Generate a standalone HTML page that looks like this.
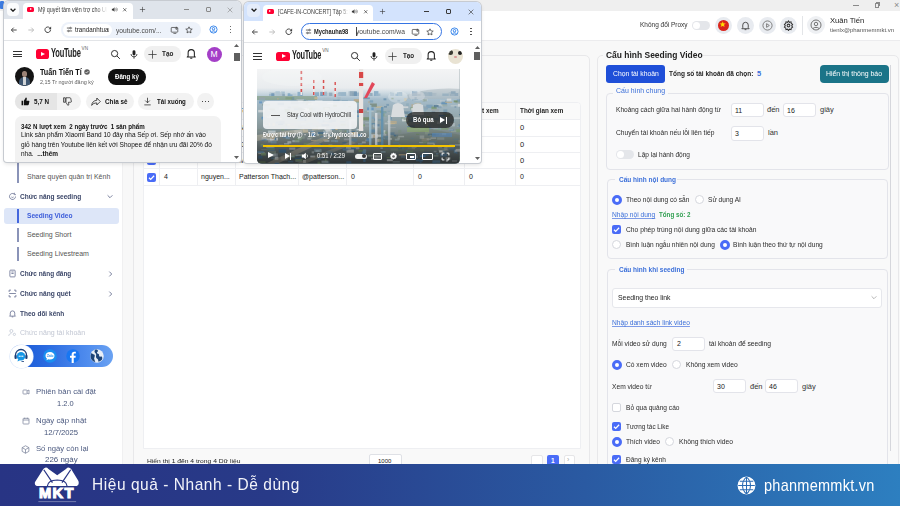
<!DOCTYPE html>
<html><head><meta charset="utf-8">
<style>
*{box-sizing:border-box;margin:0;padding:0}
html,body{width:900px;height:506px;overflow:hidden;background:#f8f8f8;font-family:"Liberation Sans",sans-serif;color:#333;position:relative}
.a{position:absolute}
.t{position:absolute;white-space:nowrap;line-height:1;transform-origin:0 0}
</style></head><body>
<!-- title bar -->
<div class="a" style="left:0;top:0;width:900px;height:11px;background:#efefef"></div>
<div class="a" style="left:0;top:1px;width:4px;height:8px;background:#3d7be0;border-radius:1px"></div>
<div class="a" style="left:853px;top:5px;width:5.5px;height:0.8px;background:#8a8a8a"></div>
<div class="a" style="left:874.5px;top:3px;width:4.5px;height:4.5px;border:0.8px solid #8a8a8a"></div><div class="a" style="left:875.8px;top:1.8px;width:4.5px;height:4.5px;border-top:0.8px solid #8a8a8a;border-right:0.8px solid #8a8a8a"></div>
<div class="t" style="left:894px;top:0.5px;font-size:9px;color:#8a8a8a">×</div>
<!-- header -->
<div class="a" style="left:0;top:11px;width:900px;height:30px;background:#fff;border-bottom:1px solid #ececee"></div>
<div class="t" style="left:640.00px;top:21px;font-size:7.5px;color:#333;transform:scaleX(0.865)">Không đổi Proxy</div>
<div class="a" style="left:692px;top:21px;width:18px;height:9px;border-radius:5px;background:#e4e6ea"><div class="a" style="left:1px;top:1px;width:7px;height:7px;border-radius:50%;background:#fff"></div></div>
<div class="a" style="left:715px;top:17px;width:17px;height:17px;border-radius:50%;background:#e8ebf0"><div class="a" style="left:3px;top:3px;width:11px;height:11px;border-radius:50%;background:#da251d"></div><div class="t" style="left:4px;top:3.5px;font-size:8px;color:#ffdf00">★</div></div>
<div class="a" style="left:737px;top:17px;width:17px;height:17px;border-radius:50%;background:#e8ebf0"></div>
<svg class="a" style="left:740px;top:20px" width="11" height="11" viewBox="0 0 24 24" fill="none" stroke="#444" stroke-width="2"><path d="M6 17V11a6 6 0 0 1 12 0v6l2 2H4z"/><path d="M10 21h4"/></svg>
<div class="a" style="left:759px;top:17px;width:17px;height:17px;border-radius:50%;background:#e8ebf0"></div>
<svg class="a" style="left:762px;top:20px" width="11" height="11" viewBox="0 0 24 24" fill="none" stroke="#777" stroke-width="2"><circle cx="12" cy="12" r="10"/><path d="M10 8l6 4-6 4z"/></svg>
<div class="a" style="left:780px;top:17px;width:17px;height:17px;border-radius:50%;background:#e8ebf0"></div>
<svg class="a" style="left:783px;top:20px" width="11" height="11" viewBox="0 0 24 24" fill="none" stroke="#333" stroke-width="2.2"><circle cx="12" cy="12" r="3"/><path d="M12 2l2 3 3.5-1 .5 3.5 3 2-2 3 2 3-3 2-.5 3.5-3.5-1-2 3-2-3-3.5 1-.5-3.5-3-2 2-3-2-3 3-2 .5-3.5 3.5 1z"/></svg>
<div class="a" style="left:802px;top:16px;width:1px;height:19px;background:#e3e5e8"></div>
<div class="a" style="left:807px;top:16px;width:18px;height:18px;border-radius:50%;background:#eef0f3"></div>
<svg class="a" style="left:810px;top:19px" width="12" height="12" viewBox="0 0 24 24" fill="none" stroke="#666" stroke-width="1.8"><circle cx="12" cy="12" r="10"/><circle cx="12" cy="10" r="3.5"/><path d="M6 19c2-3 10-3 12 0"/></svg>
<div class="t" style="left:830.00px;top:17px;font-size:8px;color:#222;transform:scaleX(0.950)">Xuân Tiến</div>
<div class="t" style="left:830.00px;top:28px;font-size:5.5px;color:#555;transform:scaleX(1.083)">tienlx@phanmemmkt.vn</div>

<!-- sidebar -->
<div class="a" style="left:0;top:40px;width:123px;height:424px;background:#fff;border-right:1px solid #f0f0f1"></div>
<div class="a" style="left:17px;top:163px;width:2px;height:7px;background:#8a93b8"></div>
<div class="a" style="left:17px;top:170px;width:2px;height:13px;background:#8a93b8"></div>
<div class="t" style="left:27px;top:173px;font-size:7px;color:#555">Share quyền quản trị Kênh</div>
<svg class="a" style="left:8px;top:192px" width="9" height="9" viewBox="0 0 24 24" fill="none" stroke="#6b7394" stroke-width="2.2"><path d="M20 12a8 8 0 1 1-4-7"/><path d="M9 13c1 2 5 2 6 0"/><path d="M17 2v5h4"/></svg>
<div class="t" style="left:19.80px;top:193px;font-size:7.5px;color:#3b4668;font-weight:bold;transform:scaleX(0.874)">Chức năng seeding</div>
<svg class="a" style="left:107px;top:194px" width="6" height="5" viewBox="0 0 10 6" fill="none" stroke="#6b7394" stroke-width="1.5"><path d="M1 1l4 4 4-4"/></svg>
<div class="a" style="left:4px;top:208px;width:115px;height:16px;background:#dde6f8;border-radius:3px"></div>
<div class="a" style="left:17px;top:209px;width:2px;height:14px;background:#4466dd"></div>
<div class="t" style="left:26.70px;top:212px;font-size:7.5px;color:#3a5bd9;font-weight:bold;transform:scaleX(0.882)">Seeding Video</div>
<div class="a" style="left:17px;top:228px;width:2px;height:14px;background:#8a93b8"></div>
<div class="t" style="left:27px;top:231px;font-size:7px;color:#555">Seeding Short</div>
<div class="a" style="left:17px;top:247px;width:2px;height:14px;background:#8a93b8"></div>
<div class="t" style="left:27px;top:250px;font-size:7px;color:#555">Seeding Livestream</div>
<svg class="a" style="left:8px;top:269px" width="9" height="9" viewBox="0 0 24 24" fill="none" stroke="#6b7394" stroke-width="2.2"><rect x="5" y="3" width="14" height="18" rx="2"/><path d="M9 8h6M9 12h6"/></svg>
<div class="t" style="left:19.90px;top:270px;font-size:7.5px;color:#3b4668;font-weight:bold;transform:scaleX(0.861)">Chức năng đăng</div>
<svg class="a" style="left:108px;top:271px" width="5" height="6" viewBox="0 0 6 10" fill="none" stroke="#6b7394" stroke-width="1.5"><path d="M1 1l4 4-4 4"/></svg>
<svg class="a" style="left:8px;top:289px" width="9" height="9" viewBox="0 0 24 24" fill="none" stroke="#6b7394" stroke-width="2.2"><path d="M3 8V3h5M16 3h5v5M21 16v5h-5M8 21H3v-5M3 12h18"/></svg>
<div class="t" style="left:19.90px;top:290px;font-size:7.5px;color:#3b4668;font-weight:bold;transform:scaleX(0.880)">Chức năng quét</div>
<svg class="a" style="left:108px;top:291px" width="5" height="6" viewBox="0 0 6 10" fill="none" stroke="#6b7394" stroke-width="1.5"><path d="M1 1l4 4-4 4"/></svg>
<svg class="a" style="left:8px;top:309px" width="9" height="9" viewBox="0 0 24 24" fill="none" stroke="#6b7394" stroke-width="2.2"><path d="M6 17V11a6 6 0 0 1 12 0v6l2 2H4z"/><path d="M10 21h4"/></svg>
<div class="t" style="left:19.90px;top:310px;font-size:7.5px;color:#3b4668;font-weight:bold;transform:scaleX(0.870)">Theo dõi kênh</div>
<svg class="a" style="left:8px;top:328px" width="9" height="9" viewBox="0 0 24 24" fill="none" stroke="#c4c9d6" stroke-width="2.2"><circle cx="9" cy="8" r="4"/><path d="M2 21c0-4 3-6 7-6"/><circle cx="17" cy="17" r="3"/></svg>
<div class="t" style="left:19.90px;top:329px;font-size:7.5px;color:#c2c7d3;transform:scaleX(0.935)">Chức năng tài khoản</div>
<!-- social pill -->
<div class="a" style="left:10px;top:344.9px;width:103px;height:22.6px;border-radius:12px;background:linear-gradient(90deg,#1656d4 0%,#2a6ae0 35%,#4f8cee 75%,#6aa2f2 100%)"></div>
<div class="a" style="left:9.8px;top:344.8px;width:23px;height:23px;border-radius:50%;background:#fff;box-shadow:0 0 0 0.6px #d6e4fa"></div>
<svg class="a" style="left:13.3px;top:348.3px" width="16" height="16" viewBox="0 0 32 32"><path d="M5 17v-3a11 11 0 0 1 22 0v3" fill="none" stroke="#1c3f78" stroke-width="2.6"/><rect x="3" y="14" width="4.5" height="8" rx="2" fill="#1c3f78"/><rect x="24.5" y="14" width="4.5" height="8" rx="2" fill="#1c3f78"/><circle cx="16" cy="16.5" r="8.5" fill="#1596e6"/><path d="M10 23l-1 4 5-2.5z" fill="#1596e6"/><circle cx="12.5" cy="16.5" r="1.3" fill="#fff"/><circle cx="16" cy="16.5" r="1.3" fill="#fff"/><circle cx="19.5" cy="16.5" r="1.3" fill="#fff"/><path d="M22 27h-5" stroke="#1c3f78" stroke-width="1.6"/></svg>
<svg class="a" style="left:42.7px;top:349px" width="14" height="14" viewBox="0 0 28 28"><circle cx="14" cy="14" r="13.5" fill="#1a8ff0"/><path d="M14 6c-5.5 0-9 3.3-9 7.5 0 2.3 1 4.2 2.8 5.6L7 22.5l3.8-1.8c1 .3 2.1.5 3.2.5 5.5 0 9-3.3 9-7.5S19.5 6 14 6z" fill="#fff"/><text x="14" y="16.3" font-family="Liberation Sans" font-size="6.5" font-weight="bold" fill="#1a8ff0" text-anchor="middle">Zalo</text></svg>
<svg class="a" style="left:66.3px;top:349px" width="14" height="14" viewBox="0 0 28 28"><circle cx="14" cy="14" r="13.5" fill="#1877f2"/><path d="M15.5 28V17.5h3.5l.5-4h-4v-2.5c0-1.2.4-2 2-2h2.2V5.5c-.4 0-1.7-.2-3.2-.2-3.2 0-5.2 1.9-5.2 5.4v2.8H8v4h3.3V28z" fill="#fff"/></svg>
<svg class="a" style="left:90px;top:349px" width="14" height="14" viewBox="0 0 28 28"><circle cx="14" cy="14" r="13.5" fill="#e8eef6"/><path d="M3 8c2 1 3 3 5 3s2 3 1 5-1 4 0 6 2 3 1 4C5 25 1 20 1 14c0-2 1-4 2-6zM11 1c3 0 5 1 5 3s-3 2-2 4 3 1 4 3-1 3 1 4 4-1 5 1 1 5-2 7-4 3-5 2 0-4-2-5-3-3-3-5 1-3 0-5-3-3-3-5 1-3 2-4z" fill="#1d4478"/></svg>
<!-- version info -->
<svg class="a" style="left:22px;top:388px" width="8" height="8" viewBox="0 0 24 24" fill="none" stroke="#7a8299" stroke-width="2.2"><rect x="3" y="6" width="12" height="12" rx="2"/><path d="M15 9l6-3v12l-6-3"/></svg>
<div class="t" style="left:35.50px;top:388px;font-size:8px;color:#4d5b80;transform:scaleX(0.971)">Phiên bản cài đặt</div>
<div class="t" style="left:57.30px;top:400px;font-size:8px;color:#46557a;font-weight:normal;transform:scaleX(0.933)">1.2.0</div>
<svg class="a" style="left:22px;top:417px" width="8" height="8" viewBox="0 0 24 24" fill="none" stroke="#7a8299" stroke-width="2.2"><rect x="3" y="4" width="18" height="17" rx="2"/><path d="M3 9h18M8 2v4M16 2v4"/></svg>
<div class="t" style="left:35.50px;top:417px;font-size:8px;color:#4d5b80;transform:scaleX(0.977)">Ngày cập nhật</div>
<div class="t" style="left:44.00px;top:429px;font-size:8px;color:#46557a;font-weight:normal;transform:scaleX(0.958)">12/7/2025</div>
<svg class="a" style="left:21px;top:445px" width="9" height="9" viewBox="0 0 24 24" fill="none" stroke="#7a8299" stroke-width="2"><path d="M12 2l9 5v10l-9 5-9-5V7z"/><path d="M3 7l9 5 9-5M12 12v10"/></svg>
<div class="t" style="left:35.50px;top:445px;font-size:8px;color:#4d5b80;transform:scaleX(0.960)">Số ngày còn lại</div>
<div class="t" style="left:45.30px;top:456px;font-size:8px;color:#46557a;font-weight:normal;transform:scaleX(0.991)">226 ngày</div>
<!-- card1 -->
<div class="a" style="left:133px;top:55px;width:457px;height:420px;background:#f9f9f9;border:1px solid #e8e8ea;border-radius:5px"></div>
<div class="a" style="left:143px;top:102px;width:438px;height:347px;background:#fff;border:1px solid #eeeff2;border-radius:4px 4px 0 0"></div>
<!-- header row -->
<div class="a" style="left:144px;top:103px;width:436px;height:17px;background:#fafafa;border-bottom:1px solid #eeeff2;border-radius:3px 3px 0 0"></div>
<div class="a" style="left:144px;top:136px;width:436px;height:1px;background:#eeeff2"></div>
<div class="a" style="left:144px;top:152px;width:436px;height:1px;background:#eeeff2"></div>
<div class="a" style="left:144px;top:168px;width:436px;height:1px;background:#eeeff2"></div>
<div class="a" style="left:144px;top:185px;width:436px;height:1px;background:#eeeff2"></div>
<!-- col dividers -->
<div class="a" style="left:159px;top:103px;width:1px;height:82px;background:#eeeff2"></div>
<div class="a" style="left:197px;top:103px;width:1px;height:82px;background:#eeeff2"></div>
<div class="a" style="left:235px;top:103px;width:1px;height:82px;background:#eeeff2"></div>
<div class="a" style="left:298px;top:103px;width:1px;height:82px;background:#eeeff2"></div>
<div class="a" style="left:346px;top:103px;width:1px;height:82px;background:#eeeff2"></div>
<div class="a" style="left:413px;top:103px;width:1px;height:82px;background:#eeeff2"></div>
<div class="a" style="left:464px;top:103px;width:1px;height:82px;background:#eeeff2"></div>
<div class="a" style="left:515px;top:103px;width:1px;height:82px;background:#eeeff2"></div>
<div class="t" style="left:238px;top:107px;font-size:7.5px;color:#222;font-weight:bold">Tên kênh</div>
<div class="t" style="left:469px;top:107px;font-size:7.5px;color:#222;font-weight:bold;transform:scaleX(0.85)">Lượt xem</div>
<div class="t" style="left:519.80px;top:107px;font-size:7.5px;color:#222;font-weight:bold;transform:scaleX(0.846)">Thời gian xem</div>
<!-- rows -->
<div class="t" style="left:239px;top:124px;font-size:7.5px;color:#222">Nguyễn...</div>
<div class="t" style="left:239px;top:141px;font-size:7.5px;color:#222">Đặng...</div>
<div class="t" style="left:239px;top:157px;font-size:7.5px;color:#222">Mai...</div>
<div class="t" style="left:520px;top:124px;font-size:7.5px;color:#222">0</div>
<div class="t" style="left:520px;top:141px;font-size:7.5px;color:#222">0</div>
<div class="t" style="left:520px;top:157px;font-size:7.5px;color:#222">0</div>
<div class="a" style="left:147px;top:156px;width:9px;height:9px;border-radius:2px;background:#4a6cf7"></div>
<div class="a" style="left:147px;top:173px;width:9px;height:9px;border-radius:2px;background:#4a6cf7"></div>
<svg class="a" style="left:147px;top:173px" width="9" height="9" viewBox="0 0 10 10" fill="none" stroke="#fff" stroke-width="1.4"><path d="M2.2 5.2l1.9 1.9 3.8-4"/></svg>
<div class="t" style="left:164px;top:173px;font-size:7px;color:#222">4</div>
<div class="t" style="left:201px;top:173px;font-size:7px;color:#222">nguyen...</div>
<div class="t" style="left:239px;top:173px;font-size:7px;color:#222">Patterson Thạch...</div>
<div class="t" style="left:302px;top:173px;font-size:7px;color:#222">@patterson...</div>
<div class="t" style="left:351px;top:173px;font-size:7px;color:#222">0</div>
<div class="t" style="left:418px;top:173px;font-size:7px;color:#222">0</div>
<div class="t" style="left:469px;top:173px;font-size:7px;color:#222">0</div>
<div class="t" style="left:520px;top:173px;font-size:7px;color:#222">0</div>
<!-- footer -->
<div class="t" style="left:147.20px;top:458px;font-size:6px;color:#222;transform:scaleX(1.121)">Hiển thị 1 đến 4 trong 4 Dữ liệu</div>
<div class="a" style="left:369px;top:454px;width:33px;height:14px;background:#fff;border:1px solid #dfe1e6;border-radius:2px"></div>
<div class="t" style="left:378px;top:458px;font-size:6px;color:#222">1000</div>
<div class="t" style="left:535px;top:456px;font-size:7px;color:#aaa">‹</div>
<div class="a" style="left:531.3px;top:454.6px;width:11.5px;height:12px;background:#fff;border:1px solid #e6e6e8;border-radius:2px"></div>
<div class="a" style="left:563.5px;top:454.6px;width:11.5px;height:12px;background:#fff;border:1px solid #e6e6e8;border-radius:2px"></div>
<div class="a" style="left:547px;top:455px;width:12px;height:12px;background:#4a6cf7;border-radius:2px"></div>
<div class="t" style="left:551px;top:458px;font-size:6.5px;color:#fff;font-weight:bold">1</div>
<div class="t" style="left:567px;top:456px;font-size:7px;color:#aaa">›</div>

<!-- card2 -->
<div class="a" style="left:597px;top:55px;width:302px;height:420px;background:#f9f9f9;border:1px solid #e8e8ea;border-radius:5px"></div>
<div class="a" style="left:603px;top:50px;width:100px;height:10px;background:#f7f8f9"></div>
<div class="t" style="left:606.20px;top:50.8px;font-size:9.2px;color:#222;font-weight:bold;transform:scaleX(0.920)">Cấu hình Seeding Video</div>
<div class="a" style="left:890px;top:65px;width:1px;height:386px;background:#d6d7dc"></div>
<div class="a" style="left:606px;top:65px;width:59px;height:18px;border-radius:3px;background:#1f4fd8"></div>
<div class="t" style="left:612.60px;top:70px;font-size:7.5px;color:#fff;transform:scaleX(0.907)">Chọn tài khoản</div>
<div class="t" style="left:668.90px;top:70px;font-size:7.5px;color:#222;font-weight:bold;transform:scaleX(0.866)">Tổng số tài khoản đã chọn:</div>
<div class="t" style="left:757px;top:70px;font-size:7.5px;color:#3b6fd9;font-weight:bold">5</div>
<div class="a" style="left:820px;top:65px;width:69px;height:18px;border-radius:4px;background:#1b7488"></div>
<div class="t" style="left:826.40px;top:70px;font-size:7.5px;color:#fff;transform:scaleX(0.920)">Hiển thị thông báo</div>
<!-- fieldset 1 -->
<div class="a" style="left:606px;top:93px;width:283px;height:77px;border:1px solid #e3e4ea;border-radius:4px;background:#f9f9fa"></div>
<div class="a" style="left:613px;top:88px;width:55px;height:8px;background:#f9f9fa"></div>
<div class="t" style="left:616.00px;top:87px;font-size:7.5px;color:#3b6fd9;transform:scaleX(0.926)">Cấu hình chung</div>
<div class="t" style="left:616.00px;top:106px;font-size:7.5px;color:#2b2b2b;transform:scaleX(0.877)">Khoảng cách giữa hai hành động từ</div>
<div class="a" style="left:731px;top:103px;width:33px;height:14px;background:#fff;border:1px solid #e3e4ea;border-radius:3px"></div>
<div class="t" style="left:735px;top:107px;font-size:7px;color:#222">11</div>
<div class="t" style="left:767px;top:106px;font-size:7.5px;color:#333">đến</div>
<div class="a" style="left:783px;top:103px;width:33px;height:14px;background:#fff;border:1px solid #e3e4ea;border-radius:3px"></div>
<div class="t" style="left:787px;top:107px;font-size:7px;color:#222">16</div>
<div class="t" style="left:820px;top:106px;font-size:7.5px;color:#333">giây</div>
<div class="t" style="left:616.00px;top:129px;font-size:7.5px;color:#2b2b2b;transform:scaleX(0.890)">Chuyển tài khoản nếu lỗi liên tiếp</div>
<div class="a" style="left:731px;top:126px;width:33px;height:15px;background:#fff;border:1px solid #e3e4ea;border-radius:3px"></div>
<div class="t" style="left:735px;top:130px;font-size:7px;color:#222">3</div>
<div class="t" style="left:768px;top:129px;font-size:7.5px;color:#333">lần</div>
<div class="a" style="left:616px;top:150px;width:18px;height:9px;border-radius:5px;background:#e4e6ea"><div class="a" style="left:1px;top:1px;width:7px;height:7px;border-radius:50%;background:#fff"></div></div>
<div class="t" style="left:638.00px;top:151px;font-size:7.5px;color:#2b2b2b;transform:scaleX(0.871)">Lặp lại hành động</div>
<!-- fieldset 2 -->
<div class="a" style="left:607px;top:179px;width:281px;height:80px;border:1px solid #e3e4ea;border-radius:4px;background:#f9f9fa"></div>
<div class="a" style="left:615px;top:174px;width:62px;height:8px;background:#f9f9fa"></div>
<div class="t" style="left:618.70px;top:176px;font-size:7.5px;color:#3b6fd9;font-weight:bold;transform:scaleX(0.866)">Cấu hình nội dung</div>
<div class="a" style="left:611.5px;top:194.5px;width:10px;height:10px;border-radius:50%;border:3.1px solid #4a6cf7;background:#fff"></div>
<div class="t" style="left:625.50px;top:196px;font-size:7.5px;color:#2b2b2b;transform:scaleX(0.879)">Theo nội dung có sẵn</div>
<div class="a" style="left:695px;top:195px;width:9px;height:9px;border-radius:50%;border:1px solid #d5d7dd;background:#fff"></div>
<div class="t" style="left:707.80px;top:196px;font-size:7.5px;color:#2b2b2b;transform:scaleX(0.875)">Sử dụng AI</div>
<div class="t" style="left:612.00px;top:211px;font-size:7px;color:#3b6fd9;text-decoration:underline;text-decoration-color:#7d9be8;text-decoration-thickness:0.6px;transform:scaleX(0.950)">Nhập nội dung</div>
<div class="t" style="left:659.40px;top:211px;font-size:7px;color:#2e9e4f;font-weight:bold;transform:scaleX(0.890)">Tổng số: 2</div>
<div class="a" style="left:612px;top:225px;width:9px;height:9px;border-radius:2px;background:#4a6cf7"></div>
<svg class="a" style="left:612px;top:225px" width="9" height="9" viewBox="0 0 10 10" fill="none" stroke="#fff" stroke-width="1.4"><path d="M2.2 5.2l1.9 1.9 3.8-4"/></svg>
<div class="t" style="left:625.50px;top:226px;font-size:7.5px;color:#2b2b2b;transform:scaleX(0.894)">Cho phép trùng nội dung giữa các tài khoản</div>
<div class="a" style="left:612px;top:240px;width:9px;height:9px;border-radius:50%;border:1px solid #d5d7dd;background:#fff"></div>
<div class="t" style="left:625.50px;top:241px;font-size:7.5px;color:#2b2b2b;transform:scaleX(0.873)">Bình luận ngẫu nhiên nội dung</div>
<div class="a" style="left:719.5px;top:239.5px;width:10px;height:10px;border-radius:50%;border:3.1px solid #4a6cf7;background:#fff"></div>
<div class="t" style="left:732.90px;top:241px;font-size:7.5px;color:#2b2b2b;transform:scaleX(0.882)">Bình luận theo thứ tự nội dung</div>
<!-- fieldset 3 -->
<div class="a" style="left:607px;top:269px;width:281px;height:220px;border:1px solid #e3e4ea;border-radius:4px;background:#f9f9fa"></div>
<div class="a" style="left:615px;top:264px;width:72px;height:8px;background:#f9f9fa"></div>
<div class="t" style="left:618.70px;top:266px;font-size:7.5px;color:#3b6fd9;font-weight:bold;transform:scaleX(0.867)">Cấu hình khi seeding</div>
<div class="a" style="left:612px;top:288px;width:270px;height:20px;background:#fff;border:1px solid #e6e7ec;border-radius:3px"></div>
<div class="t" style="left:617.70px;top:294px;font-size:7.5px;color:#222;transform:scaleX(0.913)">Seeding theo link</div>
<svg class="a" style="left:871px;top:295px" width="6" height="5" viewBox="0 0 10 6" fill="none" stroke="#999" stroke-width="1.2"><path d="M1 1l4 4 4-4"/></svg>
<div class="t" style="left:612.00px;top:319px;font-size:7px;color:#3b6fd9;text-decoration:underline;text-decoration-color:#7d9be8;text-decoration-thickness:0.6px;transform:scaleX(0.949)">Nhập danh sách link video</div>
<div class="t" style="left:612.00px;top:340px;font-size:7.5px;color:#2b2b2b;transform:scaleX(0.888)">Mỗi video sử dụng</div>
<div class="a" style="left:672px;top:337px;width:33px;height:14px;background:#fff;border:1px solid #e3e4ea;border-radius:3px"></div>
<div class="t" style="left:677px;top:340px;font-size:7px;color:#222">2</div>
<div class="t" style="left:709.20px;top:340px;font-size:7.5px;color:#2b2b2b;transform:scaleX(0.896)">tài khoản để seeding</div>
<div class="a" style="left:611.5px;top:359.5px;width:10px;height:10px;border-radius:50%;border:3.1px solid #4a6cf7;background:#fff"></div>
<div class="t" style="left:625.50px;top:361px;font-size:7.5px;color:#2b2b2b;transform:scaleX(0.887)">Có xem video</div>
<div class="a" style="left:672px;top:360px;width:9px;height:9px;border-radius:50%;border:1px solid #d5d7dd;background:#fff"></div>
<div class="t" style="left:685.50px;top:361px;font-size:7.5px;color:#2b2b2b;transform:scaleX(0.893)">Không xem video</div>
<div class="t" style="left:612.00px;top:383px;font-size:7.5px;color:#2b2b2b;transform:scaleX(0.888)">Xem video từ</div>
<div class="a" style="left:713px;top:379px;width:33px;height:14px;background:#fff;border:1px solid #e3e4ea;border-radius:3px"></div>
<div class="t" style="left:717px;top:383px;font-size:7px;color:#222">30</div>
<div class="t" style="left:750px;top:383px;font-size:7.5px;color:#333">đến</div>
<div class="a" style="left:765px;top:379px;width:33px;height:14px;background:#fff;border:1px solid #e3e4ea;border-radius:3px"></div>
<div class="t" style="left:769px;top:383px;font-size:7px;color:#222">46</div>
<div class="t" style="left:802px;top:383px;font-size:7.5px;color:#333">giây</div>
<div class="a" style="left:612px;top:403px;width:9px;height:9px;border-radius:2px;border:1px solid #d5d7dd;background:#fff"></div>
<div class="t" style="left:625.50px;top:404px;font-size:7.5px;color:#2b2b2b;transform:scaleX(0.878)">Bỏ qua quảng cáo</div>
<div class="a" style="left:612px;top:422px;width:9px;height:9px;border-radius:2px;background:#4a6cf7"></div>
<svg class="a" style="left:612px;top:422px" width="9" height="9" viewBox="0 0 10 10" fill="none" stroke="#fff" stroke-width="1.4"><path d="M2.2 5.2l1.9 1.9 3.8-4"/></svg>
<div class="t" style="left:625.50px;top:423px;font-size:7.5px;color:#2b2b2b;transform:scaleX(0.846)">Tương tác Like</div>
<div class="a" style="left:611.5px;top:436.5px;width:10px;height:10px;border-radius:50%;border:3.1px solid #4a6cf7;background:#fff"></div>
<div class="t" style="left:625.50px;top:438px;font-size:7.5px;color:#2b2b2b;transform:scaleX(0.874)">Thích video</div>
<div class="a" style="left:665px;top:437px;width:9px;height:9px;border-radius:50%;border:1px solid #d5d7dd;background:#fff"></div>
<div class="t" style="left:678.70px;top:438px;font-size:7.5px;color:#2b2b2b;transform:scaleX(0.898)">Không thích video</div>
<div class="a" style="left:612px;top:455px;width:9px;height:9px;border-radius:2px;background:#4a6cf7"></div>
<svg class="a" style="left:612px;top:455px" width="9" height="9" viewBox="0 0 10 10" fill="none" stroke="#fff" stroke-width="1.4"><path d="M2.2 5.2l1.9 1.9 3.8-4"/></svg>
<div class="t" style="left:625.50px;top:456px;font-size:7.5px;color:#2b2b2b;transform:scaleX(0.871)">Đăng ký kênh</div>
<div class="a" style="left:3.5px;top:1.3px;width:237.50px;height:160.30px;background:#fff;border-radius:5px 5px 3px 3px;box-shadow:0 0 0 1px #c7cbd1, 0 2px 4px rgba(0,0,0,.12)"></div>
<div class="a" style="left:3.5px;top:1.3px;width:237.50px;height:17.40px;background:#dfe4eb;border-radius:5px 5px 0 0"></div>
<div class="a" style="left:6.7px;top:3.1px;width:12.40px;height:12.90px;background:#fbfcfd;border-radius:4px"></div>
<svg class="a" style="left:10.30px;top:7.50px;" width="6" height="4" viewBox="0 0 10 6"><path d="M1 1l4 4 4-4" fill="none" stroke="#1f1f1f" stroke-width="2.2"/></svg>
<div class="a" style="left:23.1px;top:2.7px;width:109.90px;height:16.50px;background:#fff;border-radius:4px 4px 0 0"></div>
<div class="a" style="left:26.700000000000003px;top:6.8999999999999995px;width:7.60px;height:5.40px;background:#ff0033;border-radius:1.6px"></div>
<div class="a" style="left:29.50px;top:8.00px;width:0;height:0;border-left:2.8px solid #fff;border-top:1.6px solid transparent;border-bottom:1.6px solid transparent"></div>
<div class="a" style="left:38.30px;top:5.70px;width:69px;height:9px;overflow:hidden;-webkit-mask-image:linear-gradient(90deg,#000 85%,transparent)"><div class="t" style="left:0;top:0.9px;font-size:6.6px;color:#3a3a3a;transform:scaleX(0.82)">Mỹ quyết tâm viện trợ cho Ukraine</div></div>
<svg class="a" style="left:110.50px;top:6.10px;" width="7" height="7" viewBox="0 0 24 24"><path d="M3 9h4l5-5v16l-5-5H3z" fill="#3a3a3a"/><path d="M15.5 8.5c1.8 2 1.8 5 0 7M18.5 5.5c3.5 3.5 3.5 9.5 0 13" stroke="#3a3a3a" stroke-width="2" fill="none"/></svg>
<svg class="a" style="left:121.85px;top:6.85px;" width="5.5" height="5.5" viewBox="0 0 24 24"><path d="M5 5l14 14M19 5L5 19" stroke="#222" stroke-width="2.6" fill="none"/></svg>
<svg class="a" style="left:138.70px;top:6.10px;" width="7" height="7" viewBox="0 0 24 24"><path d="M12 3v18M3 12h18" stroke="#333" stroke-width="2" fill="none"/></svg>
<div class="a" style="left:184.0px;top:9.2px;width:5.00px;height:0.90px;background:#8a8a8a"></div>
<div class="a" style="left:205.5px;top:7.1px;width:5.00px;height:5.00px;border:0.75px solid #8a8a8a;border-radius:1px"></div>
<svg class="a" style="left:225.90px;top:5.60px;" width="8" height="8" viewBox="0 0 24 24"><path d="M5 5l14 14M19 5L5 19" stroke="#8a8a8a" stroke-width="1.9" fill="none"/></svg>
<div class="a" style="left:3.5px;top:39.9px;width:237.50px;height:0.80px;background:#e3e5e8"></div>
<svg class="a" style="left:10.20px;top:25.80px;" width="8" height="8" viewBox="0 0 24 24"><path d="M20 12H5M11 5l-7 7 7 7" fill="none" stroke="#3c3c3c" stroke-width="2.8"/></svg>
<svg class="a" style="left:27.20px;top:25.80px;" width="8" height="8" viewBox="0 0 24 24"><path d="M4 12h15M13 5l7 7-7 7" fill="none" stroke="#b0b0b0" stroke-width="2.4"/></svg>
<svg class="a" style="left:43.45px;top:25.05px;" width="9.5" height="9.5" viewBox="0 0 24 24"><path d="M19 12a7 7 0 1 1-2.2-5.1" fill="none" stroke="#3c3c3c" stroke-width="2.4"/><path d="M20.5 4v6.5H14z" fill="#3c3c3c"/></svg>
<div class="a" style="left:61.4px;top:22.2px;width:139.60px;height:15.40px;background:#edf2fa;border-radius:9px"></div>
<div class="a" style="left:63.0px;top:24.0px;width:48.80px;height:11.80px;background:#fff;border-radius:7px"></div>
<svg class="a" style="left:65.70px;top:26.30px;" width="7" height="7" viewBox="0 0 24 24"><path d="M3 7h9M18 7h3M3 17h3M12 17h9" stroke="#3a3a3a" stroke-width="2.6" fill="none"/><circle cx="15" cy="7" r="2.6" fill="none" stroke="#3a3a3a" stroke-width="2.4"/><circle cx="9" cy="17" r="2.6" fill="none" stroke="#3a3a3a" stroke-width="2.4"/></svg>
<div class="a" style="left:74.70px;top:24.80px;width:34.6px;height:10px;overflow:hidden"><div class="t" style="left:0.00px;top:2.5px;font-size:6.6px;color:#222;font-weight:normal;transform:scaleX(0.948)">trandanhtuan</div></div>
<div class="a" style="left:116.40px;top:24.80px;width:47px;height:10px;overflow:hidden"><div class="t" style="left:-0.50px;top:1.8px;font-size:7.6px;color:#474747;transform:scaleX(0.875)">youtube.com/...</div></div>
<svg class="a" style="left:169.70px;top:25.80px;" width="9" height="8" viewBox="0 0 22 22"><rect x="2" y="4" width="18" height="13" rx="1.5" fill="none" stroke="#3c3c3c" stroke-width="2"/><path d="M8 21h8M16 2v7M13 6.5l3 3 3-3" fill="none" stroke="#3c3c3c" stroke-width="2"/></svg>
<svg class="a" style="left:185.40px;top:25.80px;" width="8" height="8" viewBox="0 0 24 24"><path d="M12 2.5l2.9 6.2 6.8.7-5.1 4.6 1.4 6.7L12 17.3l-6 3.4 1.4-6.7-5.1-4.6 6.8-.7z" fill="none" stroke="#3c3c3c" stroke-width="2.2" stroke-linejoin="round"/></svg>
<svg class="a" style="left:208.80px;top:25.30px;" width="9" height="9" viewBox="0 0 24 24"><circle cx="12" cy="12" r="9.5" fill="none" stroke="#1a73e8" stroke-width="2.2"/><circle cx="12" cy="10" r="3.3" fill="none" stroke="#1a73e8" stroke-width="2.2"/><path d="M6.3 18.5c2.5-3.5 8.9-3.5 11.4 0" fill="none" stroke="#1a73e8" stroke-width="2.2"/></svg>
<div class="a" style="left:229.9px;top:26.1px;width:1.40px;height:1.40px;background:#3c3c3c;border-radius:50%"></div>
<div class="a" style="left:229.9px;top:29.1px;width:1.40px;height:1.40px;background:#3c3c3c;border-radius:50%"></div>
<div class="a" style="left:229.9px;top:32.099999999999994px;width:1.40px;height:1.40px;background:#3c3c3c;border-radius:50%"></div>
<div class="a" style="left:13.0px;top:51.05px;width:8.60px;height:0.90px;background:#333"></div>
<div class="a" style="left:13.0px;top:53.75px;width:8.60px;height:0.90px;background:#333"></div>
<div class="a" style="left:13.0px;top:56.45px;width:8.60px;height:0.90px;background:#333"></div>
<div class="a" style="left:35.6px;top:49.400000000000006px;width:13.90px;height:9.60px;background:#ff0033;border-radius:2.6px"></div>
<div class="a" style="left:40.90px;top:52.00px;width:0;height:0;border-left:4px solid #fff;border-top:2.2px solid transparent;border-bottom:2.2px solid transparent"></div>
<div class="t" style="left:50.70px;top:47.00px;font-size:12.2px;color:#212121;font-weight:bold;letter-spacing:-0.3px;transform:scaleX(0.614)">YouTube</div>
<div class="t" style="left:81.6px;top:47.07px;font-size:4.6px;color:#606060;">VN</div>
<svg class="a" style="left:109.80px;top:48.70px;" width="11" height="11" viewBox="0 0 24 24"><circle cx="10" cy="10" r="6.8" fill="none" stroke="#212121" stroke-width="2"/><path d="M15 15l6.5 6.5" stroke="#212121" stroke-width="2"/></svg>
<svg class="a" style="left:128.90px;top:48.70px;" width="10" height="11" viewBox="0 0 24 24"><rect x="8.5" y="2" width="7" height="12.5" rx="3.5" fill="#212121"/><path d="M5 11c0 4 3 6.5 7 6.5s7-2.5 7-6.5M12 17.5V22" stroke="#212121" stroke-width="2" fill="none"/></svg>
<div class="a" style="left:143.9px;top:46.2px;width:37.40px;height:16.00px;background:#f0f0f0;border-radius:9px"></div>
<svg class="a" style="left:146.60px;top:48.70px;" width="11" height="11" viewBox="0 0 24 24"><path d="M12 3v18M3 12h18" stroke="#333" stroke-width="1.6" fill="none"/></svg>
<div class="t" style="left:162.30px;top:50.24px;font-size:7.2px;color:#1f1f1f;font-weight:bold;transform:scaleX(0.891)">Tạo</div>
<svg class="a" style="left:184.55px;top:46.75px;" width="12.5" height="12.5" viewBox="0 0 24 24"><path d="M6 17.5V11a6 6 0 0 1 12 0v6.5l1.8 1.8H4.2z" fill="none" stroke="#212121" stroke-width="2" stroke-linejoin="round"/><path d="M10 21.5h4" stroke="#212121" stroke-width="2"/></svg>
<div class="a" style="left:207.2px;top:46.7px;width:15.00px;height:15.00px;background:#a43fc7;border-radius:50%"></div>
<div class="t" style="left:210.4px;top:49.67px;font-size:8.6px;color:#fff;">M</div>
<svg class="a" style="left:234.30px;top:44.00px;" width="5" height="3" viewBox="0 0 10 6"><path d="M0 6L5 0l5 6z" fill="#606060"/></svg>
<div class="a" style="left:233.8px;top:52.7px;width:6.20px;height:7.90px;background:#5f5f5f"></div>
<svg class="a" style="left:234.30px;top:155.50px;" width="5" height="3" viewBox="0 0 10 6"><path d="M0 0l5 6 5-6z" fill="#606060"/></svg>
<div class="a" style="left:14.7px;top:67.1px;width:19.2px;height:19.2px;border-radius:50%;background:#141414;overflow:hidden"><div class="a" style="left:7px;top:3.5px;width:5px;height:6px;border-radius:45%;background:#9a8276"></div><div class="a" style="left:4px;top:10px;width:11px;height:10px;border-radius:5px 5px 0 0;background:#3f5670"></div><div class="a" style="left:8px;top:10px;width:3.5px;height:8px;background:#cfd3d6"></div></div>
<div class="t" style="left:39.80px;top:68.07px;font-size:8.6px;color:#0f0f0f;font-weight:bold;transform:scaleX(0.837)">Tuấn Tiến Tí</div>
<svg class="a" style="left:83.50px;top:69.40px;" width="6" height="6" viewBox="0 0 24 24"><circle cx="12" cy="12" r="11" fill="#606060"/><path d="M6.5 12.5l3.5 3.5 7.5-8" stroke="#fff" stroke-width="3" fill="none"/></svg>
<div class="t" style="left:39.80px;top:78.79px;font-size:6.2px;color:#606060;transform:scaleX(0.883)">2,15 Tr người đăng ký</div>
<div class="a" style="left:107.6px;top:68.7px;width:38.80px;height:16.80px;background:#0f0f0f;border-radius:9px"></div>
<div class="t" style="left:114.90px;top:73.14px;font-size:7.2px;color:#fff;font-weight:bold;transform:scaleX(0.854)">Đăng ký</div>
<div class="a" style="left:15.2px;top:93px;width:65.70px;height:17.40px;background:#f2f2f2;border-radius:9px"></div>
<div class="a" style="left:15.2px;top:93px;width:41.80px;height:17.40px;background:#e5e5e5;border-radius:9px 0 0 9px"></div>
<svg class="a" style="left:20.50px;top:97.00px;" width="9" height="9" viewBox="0 0 24 24"><path d="M1.5 10h4.5v12H1.5zM8 22h10.5c1 0 1.9-.7 2.1-1.7l1.8-8.3c.2-1.1-.6-2-1.7-2H14.5l1-5.2C15.8 3.3 14.5 1.5 13 1.5L8 9.5z" fill="#0f0f0f"/></svg>
<div class="t" style="left:34.30px;top:97.94px;font-size:7.2px;color:#0f0f0f;font-weight:bold;transform:scaleX(0.878)">5,7 N</div>
<svg class="a" style="left:63.30px;top:97.00px;" width="9" height="9" viewBox="0 0 24 24"><path d="M1.5 2h4.5v12H1.5zM8 2h10.5c1 0 1.9.7 2.1 1.7l1.8 8.3c.2 1.1-.6 2-1.7 2H14.5l1 5.2c.3 1.5-1 3.3-2.5 3.3L8 14.5z" fill="none" stroke="#0f0f0f" stroke-width="1.8"/></svg>
<div class="a" style="left:85.6px;top:93px;width:48.40px;height:17.40px;background:#f2f2f2;border-radius:9px"></div>
<svg class="a" style="left:90.60px;top:97.00px;" width="10" height="9" viewBox="0 0 24 22"><path d="M14 2.5l8.5 8.5-8.5 8.5v-5C8 14.5 4 16.5 1.5 20.5c.5-7 4.5-11.5 12.5-12.5z" fill="none" stroke="#0f0f0f" stroke-width="1.8" stroke-linejoin="round"/></svg>
<div class="t" style="left:104.50px;top:97.94px;font-size:7.2px;color:#0f0f0f;font-weight:bold;transform:scaleX(0.879)">Chia sẻ</div>
<div class="a" style="left:138px;top:93px;width:55.50px;height:17.40px;background:#f2f2f2;border-radius:9px"></div>
<svg class="a" style="left:143.30px;top:97.00px;" width="9" height="9" viewBox="0 0 24 24"><path d="M12 2v13M6 9.5l6 6 6-6M3.5 21h17" fill="none" stroke="#0f0f0f" stroke-width="1.8"/></svg>
<div class="t" style="left:156.90px;top:97.94px;font-size:7.2px;color:#0f0f0f;font-weight:bold;transform:scaleX(0.850)">Tải xuống</div>
<div class="a" style="left:197.2px;top:93px;width:16.60px;height:17.40px;background:#f2f2f2;border-radius:50%"></div>
<div class="a" style="left:201.7px;top:100.9px;width:1.60px;height:1.60px;background:#0f0f0f;border-radius:50%"></div>
<div class="a" style="left:204.7px;top:100.9px;width:1.60px;height:1.60px;background:#0f0f0f;border-radius:50%"></div>
<div class="a" style="left:207.7px;top:100.9px;width:1.60px;height:1.60px;background:#0f0f0f;border-radius:50%"></div>
<div class="a" style="left:15.2px;top:116px;width:205.8px;height:45.6px;background:#f2f2f2;border-radius:7px 7px 0 0"></div>
<div class="t" style="left:20.80px;top:123.89px;font-size:7.1px;color:#0f0f0f;font-weight:bold;transform:scaleX(0.870)">342 N lượt xem&nbsp; 2 ngày trước&nbsp; 1 sản phẩm</div>
<div class="t" style="left:20.80px;top:132.29px;font-size:7.1px;color:#0f0f0f;transform:scaleX(0.913)">Link sản phẩm Xiaomi Band 10 đây nha Sếp ơi. Sếp nhớ ấn vào</div>
<div class="t" style="left:20.80px;top:141.69px;font-size:7.1px;color:#0f0f0f;transform:scaleX(0.920)">giỏ hàng trên Youtube liên kết với Shopee để nhận ưu đãi 20% đó</div>
<div class="t" style="left:20.80px;top:151.40px;font-size:7.1px;color:#0f0f0f;transform:scaleX(0.911)">nha.&nbsp; <b>...thêm</b></div>
<div class="a" style="left:244px;top:2.2px;width:237.00px;height:161.30px;background:#fff;border-radius:5px 5px 3px 3px;box-shadow:0 0 0 1px #c7cbd1, 0 2px 4px rgba(0,0,0,.12)"></div>
<div class="a" style="left:244px;top:2.2px;width:237.00px;height:18.60px;background:#d3e3fd;border-radius:5px 5px 0 0"></div>
<div class="a" style="left:247.2px;top:4.0px;width:12.40px;height:12.90px;background:#e5edfb;border-radius:4px"></div>
<svg class="a" style="left:250.80px;top:8.40px;" width="6" height="4" viewBox="0 0 10 6"><path d="M1 1l4 4 4-4" fill="none" stroke="#1f1f1f" stroke-width="2.2"/></svg>
<div class="a" style="left:263px;top:4.7px;width:110.00px;height:16.60px;background:#fff;border-radius:4px 4px 0 0"></div>
<div class="a" style="left:266.6px;top:8.899999999999999px;width:7.60px;height:5.40px;background:#ff0033;border-radius:1.6px"></div>
<div class="a" style="left:269.40px;top:10.00px;width:0;height:0;border-left:2.8px solid #fff;border-top:1.6px solid transparent;border-bottom:1.6px solid transparent"></div>
<div class="a" style="left:278.20px;top:7.70px;width:72px;height:9px;overflow:hidden;-webkit-mask-image:linear-gradient(90deg,#000 85%,transparent)"><div class="t" style="left:0;top:0.9px;font-size:6.6px;color:#3a3a3a;transform:scaleX(0.82)">[CAFE-IN-CONCERT] Tập 5: Mỹ Tâm</div></div>
<svg class="a" style="left:350.50px;top:8.10px;" width="7" height="7" viewBox="0 0 24 24"><path d="M3 9h4l5-5v16l-5-5H3z" fill="#3a3a3a"/><path d="M15.5 8.5c1.8 2 1.8 5 0 7M18.5 5.5c3.5 3.5 3.5 9.5 0 13" stroke="#3a3a3a" stroke-width="2" fill="none"/></svg>
<svg class="a" style="left:362.95px;top:8.85px;" width="5.5" height="5.5" viewBox="0 0 24 24"><path d="M5 5l14 14M19 5L5 19" stroke="#222" stroke-width="2.6" fill="none"/></svg>
<svg class="a" style="left:378.90px;top:8.10px;" width="7" height="7" viewBox="0 0 24 24"><path d="M12 3v18M3 12h18" stroke="#333" stroke-width="2" fill="none"/></svg>
<div class="a" style="left:424.0px;top:11.2px;width:5.00px;height:0.90px;background:#3a3a3a"></div>
<div class="a" style="left:445.9px;top:9.1px;width:5.00px;height:5.00px;border:0.75px solid #3a3a3a;border-radius:1px"></div>
<svg class="a" style="left:466.50px;top:7.60px;" width="8" height="8" viewBox="0 0 24 24"><path d="M5 5l14 14M19 5L5 19" stroke="#3a3a3a" stroke-width="1.9" fill="none"/></svg>
<div class="a" style="left:244px;top:41.7px;width:237.00px;height:0.80px;background:#e3e5e8"></div>
<svg class="a" style="left:251.00px;top:27.70px;" width="8" height="8" viewBox="0 0 24 24"><path d="M20 12H5M11 5l-7 7 7 7" fill="none" stroke="#3c3c3c" stroke-width="2.8"/></svg>
<svg class="a" style="left:268.00px;top:27.70px;" width="8" height="8" viewBox="0 0 24 24"><path d="M4 12h15M13 5l7 7-7 7" fill="none" stroke="#b0b0b0" stroke-width="2.4"/></svg>
<svg class="a" style="left:284.25px;top:26.95px;" width="9.5" height="9.5" viewBox="0 0 24 24"><path d="M19 12a7 7 0 1 1-2.2-5.1" fill="none" stroke="#3c3c3c" stroke-width="2.4"/><path d="M20.5 4v6.5H14z" fill="#3c3c3c"/></svg>
<div class="a" style="left:300.6px;top:23.3px;width:141.00px;height:16.40px;background:#fff;border:1.4px solid #3574e3;border-radius:9px"></div>
<svg class="a" style="left:304.90px;top:28.20px;" width="7" height="7" viewBox="0 0 24 24"><path d="M3 7h9M18 7h3M3 17h3M12 17h9" stroke="#3a3a3a" stroke-width="2.6" fill="none"/><circle cx="15" cy="7" r="2.6" fill="none" stroke="#3a3a3a" stroke-width="2.4"/><circle cx="9" cy="17" r="2.6" fill="none" stroke="#3a3a3a" stroke-width="2.4"/></svg>
<div class="t" style="left:314.40px;top:29.07px;font-size:6.6px;color:#222;font-weight:bold;transform:scaleX(0.865)">Mychauha98</div>
<div class="a" style="left:355.8px;top:27.2px;width:0.70px;height:9.00px;background:#444"></div>
<div class="a" style="left:355.60px;top:26.70px;width:49.5px;height:10px;overflow:hidden"><div class="t" style="left:0.5px;top:1.8px;font-size:7.6px;color:#474747;transform:scaleX(0.885)">youtube.com/watch?v=</div></div>
<svg class="a" style="left:410.50px;top:27.70px;" width="9" height="8" viewBox="0 0 22 22"><rect x="2" y="4" width="18" height="13" rx="1.5" fill="none" stroke="#3c3c3c" stroke-width="2"/><path d="M8 21h8M16 2v7M13 6.5l3 3 3-3" fill="none" stroke="#3c3c3c" stroke-width="2"/></svg>
<svg class="a" style="left:426.20px;top:27.70px;" width="8" height="8" viewBox="0 0 24 24"><path d="M12 2.5l2.9 6.2 6.8.7-5.1 4.6 1.4 6.7L12 17.3l-6 3.4 1.4-6.7-5.1-4.6 6.8-.7z" fill="none" stroke="#3c3c3c" stroke-width="2.2" stroke-linejoin="round"/></svg>
<svg class="a" style="left:449.50px;top:27.20px;" width="9" height="9" viewBox="0 0 24 24"><circle cx="12" cy="12" r="9.5" fill="none" stroke="#1a73e8" stroke-width="2.2"/><circle cx="12" cy="10" r="3.3" fill="none" stroke="#1a73e8" stroke-width="2.2"/><path d="M6.3 18.5c2.5-3.5 8.9-3.5 11.4 0" fill="none" stroke="#1a73e8" stroke-width="2.2"/></svg>
<div class="a" style="left:470.3px;top:28.0px;width:1.40px;height:1.40px;background:#3c3c3c;border-radius:50%"></div>
<div class="a" style="left:470.3px;top:31.0px;width:1.40px;height:1.40px;background:#3c3c3c;border-radius:50%"></div>
<div class="a" style="left:470.3px;top:34.0px;width:1.40px;height:1.40px;background:#3c3c3c;border-radius:50%"></div>
<div class="a" style="left:253.09999999999997px;top:53.24999999999999px;width:8.60px;height:0.90px;background:#333"></div>
<div class="a" style="left:253.09999999999997px;top:55.949999999999996px;width:8.60px;height:0.90px;background:#333"></div>
<div class="a" style="left:253.09999999999997px;top:58.65px;width:8.60px;height:0.90px;background:#333"></div>
<div class="a" style="left:276.2px;top:51.6px;width:13.90px;height:9.60px;background:#ff0033;border-radius:2.6px"></div>
<div class="a" style="left:281.50px;top:54.20px;width:0;height:0;border-left:4px solid #fff;border-top:2.2px solid transparent;border-bottom:2.2px solid transparent"></div>
<div class="t" style="left:291.60px;top:49.20px;font-size:12.2px;color:#212121;font-weight:bold;letter-spacing:-0.3px;transform:scaleX(0.604)">YouTube</div>
<div class="t" style="left:322.2px;top:49.27px;font-size:4.6px;color:#606060;">VN</div>
<svg class="a" style="left:350.10px;top:50.90px;" width="11" height="11" viewBox="0 0 24 24"><circle cx="10" cy="10" r="6.8" fill="none" stroke="#212121" stroke-width="2"/><path d="M15 15l6.5 6.5" stroke="#212121" stroke-width="2"/></svg>
<svg class="a" style="left:369.20px;top:50.90px;" width="10" height="11" viewBox="0 0 24 24"><rect x="8.5" y="2" width="7" height="12.5" rx="3.5" fill="#212121"/><path d="M5 11c0 4 3 6.5 7 6.5s7-2.5 7-6.5M12 17.5V22" stroke="#212121" stroke-width="2" fill="none"/></svg>
<div class="a" style="left:384.6px;top:48.4px;width:37.40px;height:16.00px;background:#f0f0f0;border-radius:9px"></div>
<svg class="a" style="left:387.30px;top:50.90px;" width="11" height="11" viewBox="0 0 24 24"><path d="M12 3v18M3 12h18" stroke="#333" stroke-width="1.6" fill="none"/></svg>
<div class="t" style="left:403.00px;top:52.44px;font-size:7.2px;color:#1f1f1f;font-weight:bold;transform:scaleX(0.875)">Tạo</div>
<svg class="a" style="left:425.25px;top:48.95px;" width="12.5" height="12.5" viewBox="0 0 24 24"><path d="M6 17.5V11a6 6 0 0 1 12 0v6.5l1.8 1.8H4.2z" fill="none" stroke="#212121" stroke-width="2" stroke-linejoin="round"/><path d="M10 21.5h4" stroke="#212121" stroke-width="2"/></svg>
<div class="a" style="left:447.8px;top:48.9px;width:15px;height:15px;border-radius:50%;background:#e9e3d3;overflow:hidden"><div class="a" style="left:0px;top:1px;width:5px;height:5px;border-radius:50%;background:#3a3a32"></div><div class="a" style="left:10px;top:2px;width:4px;height:4px;border-radius:50%;background:#222"></div><div class="a" style="left:6.3px;top:7.5px;width:2.5px;height:2px;border-radius:1px;background:#d99a98"></div></div>
<svg class="a" style="left:474.80px;top:46.00px;" width="5" height="3" viewBox="0 0 10 6"><path d="M0 6L5 0l5 6z" fill="#606060"/></svg>
<div class="a" style="left:474px;top:52.2px;width:6.20px;height:8.20px;background:#5f5f5f"></div>
<svg class="a" style="left:474.80px;top:157.20px;" width="5" height="3" viewBox="0 0 10 6"><path d="M0 0l5 6 5-6z" fill="#606060"/></svg><div class="a" style="left:257.3px;top:69.4px;width:202.7px;height:94.5px;border-radius:0 0 5px 5px;overflow:hidden;background:#7a8c92">
<svg class="a" style="left:0;top:0" width="202.7" height="94.5" viewBox="0 0 202.7 94.5"><defs>
<linearGradient id="sky" x1="0" y1="0" x2="0" y2="1">
<stop offset="0" stop-color="#f3f4f5"/><stop offset="0.2" stop-color="#e9ecee"/><stop offset="0.25" stop-color="#cfdbe2"/>
<stop offset="0.32" stop-color="#a5bccb"/><stop offset="0.5" stop-color="#95a8ae"/><stop offset="0.7" stop-color="#7d8a8a"/><stop offset="0.88" stop-color="#5f6a6c"/><stop offset="1" stop-color="#4c5558"/></linearGradient>
<linearGradient id="ctl" x1="0" y1="0" x2="0" y2="1"><stop offset="0" stop-color="#000" stop-opacity="0"/><stop offset="1" stop-color="#000" stop-opacity="0.4"/></linearGradient>
<filter id="bl"><feGaussianBlur stdDeviation="0.35"/></filter>
</defs><rect x="0" y="0" width="202.7" height="94.5" fill="url(#sky)"/><g filter="url(#bl)"><rect x="65.6" y="23.2" width="2.9" height="3.8" fill="#7fa6c2" opacity="0.8"/><rect x="166.5" y="23.5" width="2.6" height="3.5" fill="#8aa3b4" opacity="0.8"/><rect x="43.5" y="24.0" width="2.5" height="3.0" fill="#9ab5c8" opacity="0.8"/><rect x="18.4" y="22.6" width="4.5" height="4.4" fill="#7fa6c2" opacity="0.8"/><rect x="192.0" y="23.5" width="5.8" height="3.5" fill="#7fa6c2" opacity="0.8"/><rect x="117.0" y="22.1" width="4.4" height="4.9" fill="#7fa6c2" opacity="0.8"/><rect x="112.8" y="24.0" width="2.8" height="3.0" fill="#8aa3b4" opacity="0.8"/><rect x="23.9" y="22.6" width="3.9" height="4.4" fill="#9ab5c8" opacity="0.8"/><rect x="20.9" y="24.8" width="5.4" height="2.2" fill="#7fa6c2" opacity="0.8"/><rect x="111.0" y="25.3" width="2.4" height="1.7" fill="#9ab5c8" opacity="0.8"/><rect x="100.6" y="22.8" width="5.2" height="4.2" fill="#b9c9d3" opacity="0.8"/><rect x="118.7" y="24.5" width="4.7" height="2.5" fill="#9ab5c8" opacity="0.8"/><rect x="141.7" y="23.5" width="3.5" height="3.5" fill="#8aa3b4" opacity="0.8"/><rect x="100.4" y="23.9" width="4.1" height="3.1" fill="#8aa3b4" opacity="0.8"/><rect x="198.7" y="24.0" width="2.7" height="3.0" fill="#6d93b3" opacity="0.8"/><rect x="30.8" y="25.4" width="4.9" height="1.6" fill="#7fa6c2" opacity="0.8"/><rect x="155.0" y="22.4" width="5.4" height="4.6" fill="#6d93b3" opacity="0.8"/><rect x="68.9" y="23.8" width="4.1" height="3.2" fill="#b9c9d3" opacity="0.8"/><rect x="13.9" y="24.6" width="2.6" height="2.4" fill="#7fa6c2" opacity="0.8"/><rect x="12.3" y="23.2" width="6.2" height="3.8" fill="#b9c9d3" opacity="0.8"/><rect x="57.7" y="23.2" width="4.3" height="3.8" fill="#7fa6c2" opacity="0.8"/><rect x="190.7" y="23.4" width="4.1" height="3.6" fill="#b9c9d3" opacity="0.8"/><rect x="12.0" y="25.0" width="6.6" height="2.0" fill="#9ab5c8" opacity="0.8"/><rect x="80.7" y="23.8" width="7.5" height="3.2" fill="#9ab5c8" opacity="0.8"/><rect x="91.1" y="22.4" width="5.3" height="4.6" fill="#b9c9d3" opacity="0.8"/><rect x="175.1" y="24.0" width="3.7" height="3.0" fill="#6d93b3" opacity="0.8"/><rect x="138.4" y="24.7" width="4.3" height="2.3" fill="#7fa6c2" opacity="0.8"/><rect x="35.7" y="24.7" width="3.4" height="2.3" fill="#b9c9d3" opacity="0.8"/><rect x="168.5" y="24.5" width="3.1" height="2.5" fill="#9ab5c8" opacity="0.8"/><rect x="84.9" y="23.5" width="4.2" height="3.5" fill="#9ab5c8" opacity="0.8"/><rect x="140.0" y="23.3" width="5.1" height="3.7" fill="#7fa6c2" opacity="0.8"/><rect x="92.6" y="22.2" width="7.2" height="4.8" fill="#8aa3b4" opacity="0.8"/><rect x="79.5" y="25.1" width="4.4" height="1.9" fill="#b9c9d3" opacity="0.8"/><rect x="12.6" y="24.8" width="2.4" height="2.2" fill="#9ab5c8" opacity="0.8"/><rect x="22.3" y="25.1" width="5.6" height="1.9" fill="#8aa3b4" opacity="0.8"/><rect x="30.7" y="24.2" width="2.6" height="2.8" fill="#7fa6c2" opacity="0.8"/><rect x="14.3" y="24.2" width="3.2" height="2.8" fill="#6d93b3" opacity="0.8"/><rect x="193.7" y="23.8" width="5.6" height="3.2" fill="#7fa6c2" opacity="0.8"/><rect x="172.1" y="23.9" width="8.0" height="3.1" fill="#b9c9d3" opacity="0.8"/><rect x="63.2" y="22.9" width="2.9" height="4.1" fill="#6d93b3" opacity="0.8"/><rect x="97.0" y="23.7" width="6.2" height="3.3" fill="#9ab5c8" opacity="0.8"/><rect x="192.8" y="25.0" width="5.2" height="2.0" fill="#8aa3b4" opacity="0.8"/><rect x="185.3" y="24.5" width="6.5" height="2.5" fill="#7fa6c2" opacity="0.8"/><rect x="141.1" y="24.2" width="3.6" height="2.8" fill="#9ab5c8" opacity="0.8"/><rect x="72.1" y="23.6" width="3.3" height="3.4" fill="#8aa3b4" opacity="0.8"/><rect x="66.8" y="22.7" width="3.3" height="4.3" fill="#9ab5c8" opacity="0.8"/><rect x="163.4" y="22.9" width="6.9" height="4.1" fill="#9ab5c8" opacity="0.8"/><rect x="40.5" y="22.9" width="5.0" height="4.1" fill="#7fa6c2" opacity="0.8"/><rect x="160.2" y="24.8" width="4.8" height="2.2" fill="#8aa3b4" opacity="0.8"/><rect x="193.9" y="22.2" width="4.7" height="4.8" fill="#6d93b3" opacity="0.8"/><rect x="193.6" y="24.7" width="4.2" height="2.3" fill="#9ab5c8" opacity="0.8"/><rect x="95.3" y="23.8" width="4.0" height="3.2" fill="#8aa3b4" opacity="0.8"/><rect x="170.4" y="23.2" width="4.9" height="3.8" fill="#7fa6c2" opacity="0.8"/><rect x="169.2" y="24.1" width="2.7" height="2.9" fill="#9ab5c8" opacity="0.8"/><rect x="96.9" y="22.7" width="3.1" height="4.3" fill="#6d93b3" opacity="0.8"/><rect x="17.6" y="23.0" width="7.7" height="4.0" fill="#b9c9d3" opacity="0.8"/><rect x="81.4" y="23.0" width="7.7" height="4.0" fill="#9ab5c8" opacity="0.8"/><rect x="201.3" y="23.4" width="2.2" height="3.6" fill="#b9c9d3" opacity="0.8"/><rect x="163.5" y="22.6" width="2.9" height="4.4" fill="#b9c9d3" opacity="0.8"/><rect x="133.2" y="23.6" width="4.1" height="3.4" fill="#9ab5c8" opacity="0.8"/><rect x="0" y="27" width="60" height="4" fill="#7f9a7a" opacity="0.6"/><rect x="4.3" y="80.0" width="6.2" height="1.3" fill="#7d8f85" opacity="0.65"/><rect x="176.7" y="81.7" width="2.9" height="1.6" fill="#9aa3a8" opacity="0.68"/><rect x="154.8" y="49.2" width="5.0" height="3.1" fill="#5b86a6" opacity="0.86"/><rect x="71.7" y="57.8" width="5.3" height="3.3" fill="#7b9fb8" opacity="0.82"/><rect x="178.0" y="36.5" width="2.5" height="2.3" fill="#d6dadb" opacity="0.80"/><rect x="123.4" y="78.4" width="2.5" height="1.4" fill="#a9bcc4" opacity="0.70"/><rect x="66.1" y="61.7" width="5.1" height="3.0" fill="#a9bcc4" opacity="0.85"/><rect x="11.5" y="40.4" width="1.8" height="1.2" fill="#d6dadb" opacity="0.70"/><rect x="154.1" y="87.3" width="4.4" height="2.5" fill="#4d89c0" opacity="0.72"/><rect x="40.4" y="46.0" width="4.8" height="3.0" fill="#4d89c0" opacity="0.87"/><rect x="141.7" y="85.0" width="7.6" height="1.6" fill="#b9a98a" opacity="0.85"/><rect x="41.1" y="57.1" width="4.2" height="2.0" fill="#6f8a62" opacity="0.48"/><rect x="48.8" y="32.8" width="5.9" height="3.0" fill="#7d8f85" opacity="0.87"/><rect x="130.4" y="51.8" width="3.1" height="1.3" fill="#d6dadb" opacity="0.55"/><rect x="193.1" y="53.9" width="4.7" height="3.5" fill="#c7d0d3" opacity="0.52"/><rect x="87.5" y="61.5" width="3.7" height="1.5" fill="#6f8a62" opacity="0.49"/><rect x="74.2" y="50.0" width="4.5" height="2.8" fill="#3f6a8e" opacity="0.60"/><rect x="126.5" y="61.3" width="1.9" height="3.5" fill="#c7d0d3" opacity="0.89"/><rect x="21.2" y="45.3" width="1.8" height="2.9" fill="#4e7490" opacity="0.79"/><rect x="166.2" y="83.2" width="5.9" height="3.4" fill="#3f6a8e" opacity="0.52"/><rect x="186.3" y="65.1" width="6.1" height="1.2" fill="#5b86a6" opacity="0.81"/><rect x="37.2" y="86.2" width="3.2" height="1.0" fill="#8aa9b8" opacity="0.81"/><rect x="17.0" y="83.7" width="1.9" height="3.2" fill="#d6dadb" opacity="0.46"/><rect x="201.5" y="55.2" width="7.5" height="2.6" fill="#5b86a6" opacity="0.69"/><rect x="48.3" y="35.1" width="2.5" height="1.1" fill="#93a59a" opacity="0.87"/><rect x="127.4" y="62.5" width="2.8" height="2.1" fill="#7c9a72" opacity="0.57"/><rect x="162.9" y="92.6" width="1.7" height="1.0" fill="#4d89c0" opacity="0.70"/><rect x="38.4" y="58.9" width="7.6" height="1.3" fill="#7b9fb8" opacity="0.75"/><rect x="110.7" y="85.8" width="7.8" height="1.8" fill="#93a59a" opacity="0.89"/><rect x="69.5" y="82.1" width="6.1" height="2.6" fill="#3f6a8e" opacity="0.90"/><rect x="199.0" y="82.4" width="1.6" height="2.6" fill="#4e7490" opacity="0.64"/><rect x="11.2" y="71.2" width="4.0" height="2.3" fill="#9aa3a8" opacity="0.72"/><rect x="140.4" y="30.9" width="2.7" height="1.7" fill="#6f93ab" opacity="0.57"/><rect x="195.0" y="91.2" width="5.1" height="1.6" fill="#9aa3a8" opacity="0.55"/><rect x="37.1" y="49.8" width="2.0" height="1.7" fill="#93a59a" opacity="0.56"/><rect x="157.3" y="33.9" width="6.8" height="1.4" fill="#c9b68c" opacity="0.47"/><rect x="4.6" y="47.8" width="3.0" height="2.5" fill="#4d89c0" opacity="0.83"/><rect x="31.5" y="86.0" width="6.6" height="2.5" fill="#6f8a62" opacity="0.77"/><rect x="100.2" y="46.5" width="5.5" height="1.4" fill="#4d89c0" opacity="0.73"/><rect x="148.8" y="80.8" width="2.4" height="2.3" fill="#4d89c0" opacity="0.71"/><rect x="164.8" y="29.0" width="6.0" height="3.0" fill="#c7d0d3" opacity="0.49"/><rect x="8.5" y="69.4" width="7.7" height="1.9" fill="#d6dadb" opacity="0.70"/><rect x="127.2" y="68.7" width="5.9" height="2.2" fill="#6f93ab" opacity="0.66"/><rect x="14.2" y="88.6" width="7.3" height="1.2" fill="#4d89c0" opacity="0.48"/><rect x="149.3" y="44.4" width="2.0" height="1.7" fill="#93a59a" opacity="0.55"/><rect x="131.7" y="57.9" width="7.0" height="1.2" fill="#9aa3a8" opacity="0.80"/><rect x="125.1" y="69.8" width="2.0" height="1.4" fill="#4e7490" opacity="0.74"/><rect x="140.4" y="68.4" width="2.4" height="2.2" fill="#e4e7e8" opacity="0.57"/><rect x="136.2" y="73.0" width="5.9" height="1.7" fill="#4d89c0" opacity="0.58"/><rect x="94.4" y="77.9" width="8.0" height="2.4" fill="#9aa3a8" opacity="0.89"/><rect x="189.8" y="29.1" width="4.5" height="3.0" fill="#d6dadb" opacity="0.90"/><rect x="78.4" y="87.6" width="7.5" height="1.2" fill="#8aa9b8" opacity="0.51"/><rect x="106.2" y="89.9" width="2.4" height="3.1" fill="#4d89c0" opacity="0.58"/><rect x="22.8" y="51.7" width="4.7" height="3.2" fill="#3f6a8e" opacity="0.46"/><rect x="0.7" y="60.0" width="4.4" height="1.8" fill="#7d8f85" opacity="0.64"/><rect x="76.2" y="35.9" width="3.7" height="1.8" fill="#6f8a62" opacity="0.83"/><rect x="24.3" y="88.2" width="6.1" height="3.3" fill="#9aa3a8" opacity="0.56"/><rect x="13.2" y="53.4" width="7.2" height="1.2" fill="#7b9fb8" opacity="0.79"/><rect x="173.2" y="46.2" width="1.8" height="2.7" fill="#7d8f85" opacity="0.56"/><rect x="53.9" y="61.2" width="2.7" height="1.9" fill="#7b9fb8" opacity="0.85"/><rect x="164.6" y="69.0" width="7.4" height="3.4" fill="#b9a98a" opacity="0.54"/><rect x="16.3" y="88.7" width="4.2" height="2.5" fill="#7d8f85" opacity="0.74"/><rect x="58.0" y="31.2" width="7.5" height="1.3" fill="#e4e7e8" opacity="0.64"/><rect x="57.1" y="44.6" width="6.3" height="2.6" fill="#3f6a8e" opacity="0.75"/><rect x="61.0" y="64.2" width="4.1" height="1.4" fill="#7c9a72" opacity="0.48"/><rect x="101.5" y="80.8" width="5.1" height="2.1" fill="#6f8a62" opacity="0.90"/><rect x="91.2" y="37.1" width="2.8" height="1.2" fill="#6f8a62" opacity="0.70"/><rect x="64.7" y="51.9" width="6.8" height="1.5" fill="#6f93ab" opacity="0.79"/><rect x="83.7" y="54.9" width="4.9" height="1.9" fill="#6f8a62" opacity="0.79"/><rect x="101.0" y="65.3" width="3.8" height="2.7" fill="#4d89c0" opacity="0.73"/><rect x="174.9" y="42.0" width="3.3" height="1.6" fill="#3f6a8e" opacity="0.74"/><rect x="87.5" y="48.3" width="6.8" height="3.4" fill="#7d8f85" opacity="0.46"/><rect x="143.8" y="86.2" width="4.6" height="2.5" fill="#6f93ab" opacity="0.48"/><rect x="188.6" y="88.3" width="4.9" height="2.2" fill="#d6dadb" opacity="0.56"/><rect x="22.1" y="38.0" width="4.9" height="2.7" fill="#d6dadb" opacity="0.49"/><rect x="157.5" y="28.1" width="2.3" height="2.4" fill="#5b86a6" opacity="0.74"/><rect x="61.6" y="36.3" width="3.1" height="2.6" fill="#a9bcc4" opacity="0.49"/><rect x="60.9" y="89.3" width="2.7" height="1.7" fill="#6f93ab" opacity="0.45"/><rect x="61.1" y="57.9" width="7.7" height="2.6" fill="#c7d0d3" opacity="0.66"/><rect x="47.6" y="44.1" width="7.7" height="2.8" fill="#9aa3a8" opacity="0.47"/><rect x="39.3" y="85.5" width="5.7" height="1.2" fill="#c7d0d3" opacity="0.75"/><rect x="187.5" y="42.7" width="1.7" height="1.8" fill="#7b9fb8" opacity="0.61"/><rect x="80.3" y="28.4" width="3.4" height="3.1" fill="#8aa9b8" opacity="0.54"/><rect x="196.6" y="48.3" width="6.8" height="1.6" fill="#c7d0d3" opacity="0.57"/><rect x="180.3" y="35.1" width="5.6" height="2.5" fill="#c7d0d3" opacity="0.67"/><rect x="184.5" y="31.7" width="5.4" height="3.3" fill="#5b86a6" opacity="0.55"/><rect x="197.5" y="37.2" width="1.8" height="1.2" fill="#3f6a8e" opacity="0.65"/><rect x="144.3" y="48.4" width="2.2" height="1.2" fill="#7c9a72" opacity="0.60"/><rect x="37.6" y="88.8" width="6.4" height="1.1" fill="#3f6a8e" opacity="0.83"/><rect x="199.7" y="56.8" width="2.2" height="1.2" fill="#8aa9b8" opacity="0.61"/><rect x="193.7" y="36.0" width="7.8" height="1.5" fill="#b8c4c8" opacity="0.80"/><rect x="62.6" y="80.3" width="2.1" height="2.8" fill="#93a59a" opacity="0.62"/><rect x="186.4" y="40.5" width="3.9" height="3.2" fill="#6f93ab" opacity="0.73"/><rect x="50.3" y="68.7" width="4.1" height="1.9" fill="#d6dadb" opacity="0.48"/><rect x="186.5" y="44.7" width="6.4" height="3.2" fill="#6f8a62" opacity="0.61"/><rect x="67.9" y="90.0" width="1.8" height="2.9" fill="#6f8a62" opacity="0.87"/><rect x="60.3" y="74.9" width="5.4" height="3.0" fill="#8aa9b8" opacity="0.46"/><rect x="47.4" y="58.9" width="7.7" height="3.4" fill="#3f6a8e" opacity="0.81"/><rect x="185.2" y="81.0" width="2.4" height="2.2" fill="#6f93ab" opacity="0.81"/><rect x="149.7" y="81.5" width="6.5" height="2.5" fill="#6f8a62" opacity="0.84"/><rect x="93.4" y="78.9" width="5.4" height="2.3" fill="#3f6a8e" opacity="0.79"/><rect x="50.1" y="32.2" width="1.7" height="2.4" fill="#6f8a62" opacity="0.52"/><rect x="86.5" y="34.8" width="2.0" height="2.6" fill="#93a59a" opacity="0.49"/><rect x="101.0" y="74.1" width="4.4" height="1.6" fill="#7b9fb8" opacity="0.66"/><rect x="180.7" y="43.3" width="5.0" height="2.9" fill="#a9bcc4" opacity="0.80"/><rect x="59.6" y="46.2" width="3.2" height="1.6" fill="#4e7490" opacity="0.54"/><rect x="50.2" y="43.9" width="2.5" height="3.2" fill="#c9b68c" opacity="0.53"/><rect x="13.1" y="44.4" width="3.1" height="2.3" fill="#a9bcc4" opacity="0.74"/><rect x="200.9" y="34.7" width="4.6" height="3.0" fill="#d6dadb" opacity="0.86"/><rect x="8.2" y="47.1" width="2.3" height="1.5" fill="#c9b68c" opacity="0.54"/><rect x="15.2" y="61.3" width="2.7" height="2.5" fill="#6f93ab" opacity="0.50"/><rect x="120.8" y="68.3" width="2.9" height="1.9" fill="#7d8f85" opacity="0.47"/><rect x="202.7" y="30.5" width="6.3" height="3.3" fill="#6f93ab" opacity="0.82"/><rect x="82.9" y="52.2" width="5.5" height="1.2" fill="#5b86a6" opacity="0.81"/><rect x="111.1" y="32.1" width="2.2" height="2.0" fill="#b9a98a" opacity="0.52"/><rect x="108.2" y="70.4" width="4.1" height="1.7" fill="#9aa3a8" opacity="0.75"/><rect x="84.7" y="31.3" width="6.3" height="3.2" fill="#7b9fb8" opacity="0.64"/><rect x="175.2" y="92.8" width="3.9" height="1.5" fill="#3f6a8e" opacity="0.54"/><rect x="1.2" y="86.6" width="4.3" height="3.1" fill="#3f6a8e" opacity="0.71"/><rect x="73.9" y="78.2" width="2.3" height="1.1" fill="#7d8f85" opacity="0.74"/><rect x="184.4" y="33.8" width="5.5" height="1.9" fill="#4d89c0" opacity="0.53"/><rect x="70.5" y="38.5" width="2.6" height="1.2" fill="#3f6a8e" opacity="0.67"/><rect x="163.1" y="90.8" width="2.8" height="1.3" fill="#5b86a6" opacity="0.89"/><rect x="97.9" y="31.5" width="7.5" height="2.0" fill="#7c9a72" opacity="0.74"/><rect x="173.6" y="68.4" width="5.5" height="1.5" fill="#e4e7e8" opacity="0.53"/><rect x="44.2" y="54.0" width="4.9" height="2.0" fill="#a9bcc4" opacity="0.52"/><rect x="196.8" y="81.0" width="2.8" height="3.2" fill="#5b86a6" opacity="0.75"/><rect x="65.7" y="53.3" width="4.5" height="3.1" fill="#9aa3a8" opacity="0.74"/><rect x="62.5" y="44.2" width="4.0" height="1.9" fill="#4d89c0" opacity="0.65"/><rect x="4.7" y="68.2" width="4.7" height="1.6" fill="#d6dadb" opacity="0.83"/><rect x="164.3" y="54.0" width="1.9" height="1.9" fill="#b8c4c8" opacity="0.49"/><rect x="89.6" y="61.2" width="1.8" height="2.6" fill="#8aa9b8" opacity="0.86"/><rect x="63.6" y="74.8" width="2.0" height="2.9" fill="#3f6a8e" opacity="0.74"/><rect x="159.0" y="29.7" width="1.9" height="2.5" fill="#a9bcc4" opacity="0.54"/><rect x="199.0" y="60.0" width="7.7" height="3.3" fill="#7c9a72" opacity="0.76"/><rect x="146.2" y="42.4" width="6.9" height="2.5" fill="#4e7490" opacity="0.52"/><rect x="181.7" y="45.9" width="6.8" height="1.4" fill="#4d89c0" opacity="0.88"/><rect x="97.3" y="66.5" width="5.5" height="1.6" fill="#b8c4c8" opacity="0.47"/><rect x="36.9" y="38.5" width="7.6" height="2.7" fill="#3f6a8e" opacity="0.53"/><rect x="159.1" y="35.5" width="4.9" height="2.6" fill="#b8c4c8" opacity="0.88"/><rect x="91.8" y="61.9" width="6.0" height="3.2" fill="#4e7490" opacity="0.90"/><rect x="127.7" y="53.6" width="6.7" height="1.7" fill="#b8c4c8" opacity="0.71"/><rect x="73.0" y="77.7" width="4.4" height="1.4" fill="#5b86a6" opacity="0.58"/><rect x="104.6" y="48.2" width="7.8" height="3.2" fill="#6f8a62" opacity="0.78"/><rect x="151.4" y="42.4" width="3.4" height="2.6" fill="#7b9fb8" opacity="0.68"/><rect x="181.5" y="36.6" width="3.0" height="2.6" fill="#6f93ab" opacity="0.47"/><rect x="115.0" y="47.7" width="4.9" height="2.3" fill="#7b9fb8" opacity="0.71"/><rect x="119.4" y="41.3" width="5.6" height="2.2" fill="#7d8f85" opacity="0.46"/><rect x="162.5" y="74.0" width="4.4" height="1.2" fill="#7d8f85" opacity="0.84"/><rect x="158.5" y="54.1" width="3.2" height="1.0" fill="#b9a98a" opacity="0.85"/><rect x="120.6" y="65.6" width="5.4" height="2.3" fill="#e4e7e8" opacity="0.56"/><rect x="183.1" y="30.9" width="5.0" height="2.0" fill="#c7d0d3" opacity="0.52"/><rect x="184.8" y="34.8" width="5.5" height="2.6" fill="#93a59a" opacity="0.51"/><rect x="40.4" y="67.5" width="4.8" height="2.6" fill="#7c9a72" opacity="0.68"/><rect x="12.9" y="68.7" width="8.0" height="2.8" fill="#e4e7e8" opacity="0.77"/><rect x="1.3" y="82.9" width="6.3" height="2.2" fill="#d6dadb" opacity="0.53"/><rect x="202.0" y="45.0" width="5.7" height="1.3" fill="#4e7490" opacity="0.77"/><rect x="53.9" y="64.0" width="4.3" height="3.0" fill="#4d89c0" opacity="0.89"/><rect x="59.9" y="88.4" width="7.3" height="1.2" fill="#4d89c0" opacity="0.46"/><rect x="52.8" y="43.3" width="6.3" height="3.4" fill="#6f8a62" opacity="0.54"/><rect x="78.8" y="67.1" width="4.0" height="3.1" fill="#b9a98a" opacity="0.66"/><rect x="170.2" y="73.3" width="7.1" height="2.1" fill="#c7d0d3" opacity="0.71"/><rect x="62.4" y="41.8" width="5.5" height="1.2" fill="#7c9a72" opacity="0.52"/><rect x="5.5" y="34.9" width="7.5" height="1.9" fill="#7d8f85" opacity="0.77"/><rect x="6.3" y="37.0" width="5.7" height="1.1" fill="#8aa9b8" opacity="0.78"/><rect x="13.3" y="66.4" width="3.9" height="3.0" fill="#b9a98a" opacity="0.85"/><rect x="13.4" y="84.4" width="7.4" height="3.4" fill="#a9bcc4" opacity="0.56"/><rect x="41.2" y="30.2" width="7.7" height="3.3" fill="#8aa9b8" opacity="0.82"/><rect x="128.0" y="46.7" width="2.1" height="1.2" fill="#93a59a" opacity="0.58"/><rect x="68.2" y="45.0" width="3.8" height="3.3" fill="#5b86a6" opacity="0.77"/><rect x="74.6" y="48.9" width="7.8" height="2.3" fill="#9aa3a8" opacity="0.73"/><rect x="6.3" y="54.8" width="4.3" height="2.9" fill="#b8c4c8" opacity="0.66"/><rect x="9.8" y="64.8" width="6.1" height="3.1" fill="#c9b68c" opacity="0.82"/><rect x="34.5" y="28.1" width="2.8" height="2.9" fill="#5b86a6" opacity="0.45"/><rect x="99.5" y="59.9" width="6.7" height="1.5" fill="#e4e7e8" opacity="0.72"/><rect x="194.0" y="61.5" width="5.3" height="1.4" fill="#93a59a" opacity="0.87"/><rect x="46.9" y="38.8" width="7.6" height="2.9" fill="#e4e7e8" opacity="0.80"/><rect x="141.3" y="79.2" width="5.6" height="1.9" fill="#3f6a8e" opacity="0.87"/><rect x="180.8" y="76.4" width="4.2" height="2.6" fill="#b8c4c8" opacity="0.54"/><rect x="53.3" y="86.6" width="4.8" height="1.9" fill="#c7d0d3" opacity="0.87"/><rect x="25.7" y="66.6" width="6.0" height="2.5" fill="#5b86a6" opacity="0.61"/><rect x="66.2" y="38.1" width="7.0" height="2.7" fill="#6f8a62" opacity="0.53"/><rect x="88.9" y="78.3" width="5.3" height="1.3" fill="#d6dadb" opacity="0.74"/><rect x="141.2" y="61.0" width="3.2" height="2.9" fill="#7d8f85" opacity="0.78"/><rect x="197.6" y="75.0" width="5.4" height="1.9" fill="#c7d0d3" opacity="0.60"/><rect x="38.4" y="91.4" width="6.2" height="1.3" fill="#a9bcc4" opacity="0.54"/><rect x="30.6" y="37.6" width="3.5" height="1.7" fill="#4e7490" opacity="0.54"/><rect x="129.3" y="34.9" width="2.8" height="2.0" fill="#5b86a6" opacity="0.46"/><rect x="173.2" y="56.4" width="2.9" height="3.5" fill="#9aa3a8" opacity="0.66"/><rect x="28.7" y="67.2" width="4.1" height="2.9" fill="#7b9fb8" opacity="0.77"/><rect x="119.1" y="70.1" width="7.0" height="2.7" fill="#c9b68c" opacity="0.83"/><rect x="137.8" y="69.7" width="4.5" height="1.8" fill="#a9bcc4" opacity="0.85"/><rect x="49.1" y="54.0" width="6.1" height="1.4" fill="#7b9fb8" opacity="0.67"/><rect x="4.0" y="83.8" width="4.9" height="2.7" fill="#7c9a72" opacity="0.85"/><rect x="66.5" y="28.7" width="6.9" height="3.3" fill="#a9bcc4" opacity="0.47"/><rect x="110.1" y="38.5" width="6.6" height="3.4" fill="#4d89c0" opacity="0.61"/><rect x="171.7" y="57.7" width="2.8" height="2.2" fill="#6f93ab" opacity="0.74"/><rect x="168.0" y="61.9" width="4.2" height="3.4" fill="#93a59a" opacity="0.90"/><rect x="37.3" y="61.4" width="7.6" height="2.8" fill="#b8c4c8" opacity="0.74"/><rect x="51.2" y="52.8" width="1.9" height="1.2" fill="#7b9fb8" opacity="0.73"/><rect x="136.8" y="65.7" width="2.2" height="1.8" fill="#3f6a8e" opacity="0.87"/><rect x="106.8" y="42.2" width="6.7" height="2.0" fill="#93a59a" opacity="0.52"/><rect x="188.4" y="32.5" width="6.7" height="1.5" fill="#b9a98a" opacity="0.77"/><rect x="165.1" y="37.5" width="5.8" height="3.1" fill="#7b9fb8" opacity="0.66"/><rect x="59.7" y="63.6" width="2.3" height="3.1" fill="#b8c4c8" opacity="0.80"/><rect x="46.7" y="73.8" width="6.0" height="3.5" fill="#7c9a72" opacity="0.67"/><rect x="163.3" y="79.9" width="3.8" height="2.6" fill="#6f8a62" opacity="0.67"/><rect x="86.9" y="69.4" width="5.8" height="1.9" fill="#9aa3a8" opacity="0.83"/><rect x="11.6" y="81.8" width="7.4" height="3.0" fill="#7d8f85" opacity="0.69"/><rect x="70.0" y="65.9" width="5.8" height="1.5" fill="#8aa9b8" opacity="0.75"/><rect x="50.7" y="34.6" width="2.4" height="1.6" fill="#d6dadb" opacity="0.61"/><rect x="30.9" y="86.8" width="6.6" height="1.4" fill="#8aa9b8" opacity="0.75"/><rect x="181.2" y="79.2" width="7.0" height="1.5" fill="#93a59a" opacity="0.69"/><rect x="150.4" y="56.5" width="7.2" height="2.4" fill="#4e7490" opacity="0.64"/><rect x="167.6" y="58.8" width="5.1" height="2.2" fill="#7d8f85" opacity="0.77"/><rect x="50.0" y="38.7" width="5.4" height="2.8" fill="#7c9a72" opacity="0.83"/><rect x="94.9" y="64.6" width="5.8" height="3.1" fill="#b8c4c8" opacity="0.64"/><rect x="202.7" y="71.9" width="2.7" height="1.9" fill="#6f93ab" opacity="0.46"/><rect x="9.3" y="75.9" width="8.0" height="3.0" fill="#a9bcc4" opacity="0.68"/><rect x="98.2" y="86.3" width="1.7" height="2.8" fill="#7d8f85" opacity="0.60"/><rect x="174.7" y="51.8" width="4.6" height="2.3" fill="#93a59a" opacity="0.58"/><rect x="69.3" y="44.4" width="1.8" height="1.7" fill="#b8c4c8" opacity="0.82"/><rect x="81.8" y="60.7" width="3.3" height="2.3" fill="#93a59a" opacity="0.74"/><rect x="160.5" y="49.5" width="3.6" height="1.7" fill="#c9b68c" opacity="0.89"/><rect x="17.8" y="92.8" width="4.1" height="2.4" fill="#3f6a8e" opacity="0.70"/><rect x="10.1" y="47.5" width="1.5" height="1.5" fill="#e4e7e8" opacity="0.72"/><rect x="133.4" y="79.3" width="7.4" height="2.5" fill="#7d8f85" opacity="0.73"/><rect x="141.2" y="66.8" width="5.9" height="1.5" fill="#d6dadb" opacity="0.73"/><rect x="35.3" y="71.1" width="7.1" height="2.1" fill="#a9bcc4" opacity="0.86"/><rect x="132.9" y="52.0" width="6.8" height="3.0" fill="#b9a98a" opacity="0.77"/><rect x="174.8" y="40.0" width="1.7" height="1.1" fill="#c9b68c" opacity="0.74"/><rect x="189.3" y="31.6" width="5.2" height="1.1" fill="#a9bcc4" opacity="0.80"/><rect x="85.4" y="73.2" width="4.1" height="1.2" fill="#3f6a8e" opacity="0.72"/><rect x="201.3" y="70.9" width="2.5" height="2.9" fill="#b9a98a" opacity="0.50"/><rect x="130.6" y="41.8" width="2.5" height="1.0" fill="#6f93ab" opacity="0.45"/><rect x="135.7" y="92.1" width="7.1" height="1.5" fill="#a9bcc4" opacity="0.51"/><rect x="3.6" y="74.8" width="3.1" height="2.8" fill="#7c9a72" opacity="0.87"/><rect x="74.2" y="76.6" width="6.0" height="1.4" fill="#8aa9b8" opacity="0.58"/><rect x="113.0" y="60.4" width="5.9" height="3.2" fill="#5b86a6" opacity="0.77"/><rect x="2.3" y="29.0" width="5.7" height="3.0" fill="#8aa9b8" opacity="0.63"/><rect x="63.3" y="67.0" width="7.7" height="3.1" fill="#5b86a6" opacity="0.59"/><rect x="192.3" y="75.3" width="4.6" height="1.4" fill="#a9bcc4" opacity="0.61"/><rect x="130.7" y="68.9" width="4.2" height="2.0" fill="#d6dadb" opacity="0.88"/><rect x="159.0" y="64.8" width="3.4" height="1.2" fill="#6f8a62" opacity="0.84"/><rect x="147.1" y="29.0" width="2.5" height="3.1" fill="#c9b68c" opacity="0.64"/><rect x="180.0" y="52.5" width="6.0" height="2.5" fill="#c7d0d3" opacity="0.81"/><rect x="57.4" y="28.1" width="3.2" height="2.1" fill="#c9b68c" opacity="0.86"/><rect x="154.7" y="78.9" width="3.4" height="1.4" fill="#c9b68c" opacity="0.52"/><rect x="197.7" y="79.8" width="5.1" height="2.9" fill="#e4e7e8" opacity="0.61"/><rect x="17.2" y="64.0" width="6.7" height="1.5" fill="#c7d0d3" opacity="0.59"/><rect x="11.7" y="53.7" width="6.1" height="3.3" fill="#c9b68c" opacity="0.79"/><rect x="160.5" y="57.9" width="2.1" height="3.0" fill="#8aa9b8" opacity="0.55"/><rect x="117.5" y="86.3" width="7.3" height="2.3" fill="#e4e7e8" opacity="0.68"/><rect x="40.9" y="41.8" width="2.1" height="3.0" fill="#9aa3a8" opacity="0.61"/><rect x="114.4" y="54.2" width="4.9" height="1.4" fill="#5b86a6" opacity="0.87"/><rect x="100.0" y="84.3" width="3.9" height="2.2" fill="#8aa9b8" opacity="0.52"/><rect x="121.1" y="50.4" width="4.9" height="1.1" fill="#5b86a6" opacity="0.54"/><rect x="176.5" y="64.8" width="5.3" height="1.5" fill="#4e7490" opacity="0.64"/><rect x="191.9" y="77.9" width="6.8" height="3.4" fill="#4e7490" opacity="0.83"/><rect x="68.7" y="92.6" width="4.0" height="1.1" fill="#5b86a6" opacity="0.70"/><rect x="176.5" y="57.8" width="7.7" height="3.3" fill="#8aa9b8" opacity="0.84"/><rect x="129.7" y="87.9" width="6.1" height="1.2" fill="#6f8a62" opacity="0.70"/><rect x="129.9" y="90.2" width="5.9" height="2.0" fill="#d6dadb" opacity="0.83"/><rect x="75.2" y="43.3" width="6.2" height="1.4" fill="#4e7490" opacity="0.87"/><rect x="12.0" y="63.9" width="1.7" height="3.3" fill="#4e7490" opacity="0.80"/><rect x="143.8" y="70.0" width="7.9" height="1.1" fill="#7d8f85" opacity="0.59"/><rect x="1.2" y="40.9" width="6.4" height="2.5" fill="#d6dadb" opacity="0.79"/><rect x="21.4" y="49.1" width="3.2" height="1.3" fill="#e4e7e8" opacity="0.62"/><rect x="89.5" y="80.5" width="7.4" height="3.2" fill="#d6dadb" opacity="0.77"/><rect x="39.5" y="30.3" width="7.5" height="1.6" fill="#b8c4c8" opacity="0.85"/><rect x="28.3" y="57.1" width="2.1" height="3.3" fill="#6f93ab" opacity="0.73"/><rect x="91.7" y="50.1" width="6.8" height="2.2" fill="#b8c4c8" opacity="0.51"/><rect x="44.9" y="31.7" width="6.1" height="2.4" fill="#7d8f85" opacity="0.65"/><rect x="30.3" y="55.2" width="3.1" height="1.1" fill="#c9b68c" opacity="0.83"/><rect x="67.8" y="38.9" width="4.7" height="1.8" fill="#e4e7e8" opacity="0.50"/><rect x="198.4" y="31.7" width="7.3" height="2.7" fill="#93a59a" opacity="0.70"/><rect x="169.3" y="35.7" width="6.4" height="3.4" fill="#7b9fb8" opacity="0.90"/><rect x="202.3" y="88.1" width="2.1" height="1.7" fill="#7c9a72" opacity="0.48"/><rect x="147.3" y="47.1" width="7.9" height="1.0" fill="#4d89c0" opacity="0.60"/><rect x="28.4" y="28.1" width="6.9" height="2.3" fill="#7c9a72" opacity="0.61"/><rect x="8.2" y="54.6" width="3.3" height="1.5" fill="#7c9a72" opacity="0.68"/><rect x="46.7" y="39.4" width="5.4" height="3.1" fill="#e4e7e8" opacity="0.79"/><rect x="35.5" y="36.9" width="5.9" height="2.6" fill="#93a59a" opacity="0.71"/><rect x="41.0" y="32.3" width="6.3" height="2.0" fill="#5b86a6" opacity="0.68"/><rect x="70.5" y="46.3" width="5.7" height="3.4" fill="#8aa9b8" opacity="0.46"/><rect x="184.5" y="59.0" width="7.2" height="1.7" fill="#7c9a72" opacity="0.70"/><rect x="199.8" y="30.4" width="6.1" height="2.4" fill="#6f93ab" opacity="0.61"/><rect x="188.9" y="91.0" width="2.0" height="1.9" fill="#c7d0d3" opacity="0.82"/><rect x="175.4" y="48.9" width="6.1" height="2.0" fill="#5b86a6" opacity="0.58"/><rect x="21.8" y="75.5" width="4.4" height="1.1" fill="#b9a98a" opacity="0.51"/><rect x="49.4" y="33.8" width="5.5" height="1.4" fill="#9aa3a8" opacity="0.56"/><rect x="165.6" y="30.0" width="2.1" height="2.7" fill="#93a59a" opacity="0.57"/><rect x="169.7" y="69.4" width="4.5" height="1.6" fill="#d6dadb" opacity="0.50"/><rect x="176.3" y="74.6" width="1.8" height="1.3" fill="#e4e7e8" opacity="0.71"/><rect x="154.4" y="35.2" width="2.3" height="3.2" fill="#b9a98a" opacity="0.72"/><rect x="174.5" y="37.6" width="5.2" height="2.9" fill="#7c9a72" opacity="0.88"/><rect x="3.8" y="69.3" width="6.0" height="2.5" fill="#4d89c0" opacity="0.47"/><rect x="196.7" y="31.4" width="3.9" height="2.0" fill="#6f8a62" opacity="0.77"/><rect x="170.9" y="64.7" width="7.9" height="1.8" fill="#3f6a8e" opacity="0.83"/><rect x="10.9" y="61.6" width="7.7" height="3.3" fill="#c7d0d3" opacity="0.84"/><rect x="134.4" y="28.8" width="2.2" height="1.5" fill="#6f8a62" opacity="0.64"/><rect x="102.3" y="29.4" width="2.4" height="3.4" fill="#d6dadb" opacity="0.73"/><rect x="164.0" y="85.5" width="7.3" height="1.1" fill="#4e7490" opacity="0.86"/><rect x="126.4" y="68.8" width="6.7" height="1.1" fill="#a9bcc4" opacity="0.56"/><rect x="105.5" y="56.2" width="7.7" height="1.7" fill="#9aa3a8" opacity="0.61"/><rect x="33.8" y="31.9" width="7.7" height="3.3" fill="#4e7490" opacity="0.49"/><rect x="119.6" y="88.6" width="4.4" height="2.3" fill="#9aa3a8" opacity="0.86"/><rect x="117.0" y="45.8" width="6.3" height="2.9" fill="#9aa3a8" opacity="0.83"/><rect x="123.6" y="65.1" width="5.7" height="1.5" fill="#b8c4c8" opacity="0.66"/><rect x="111.1" y="67.8" width="4.5" height="1.8" fill="#c7d0d3" opacity="0.60"/><rect x="38.3" y="63.5" width="7.8" height="2.0" fill="#b8c4c8" opacity="0.52"/><rect x="193.0" y="49.1" width="3.6" height="1.7" fill="#93a59a" opacity="0.58"/><rect x="156.5" y="38.3" width="1.9" height="3.2" fill="#d6dadb" opacity="0.75"/><rect x="104.8" y="82.2" width="3.8" height="2.9" fill="#4d89c0" opacity="0.55"/><rect x="194.5" y="76.0" width="2.5" height="1.8" fill="#b8c4c8" opacity="0.51"/><rect x="41.0" y="67.7" width="3.3" height="3.1" fill="#a9bcc4" opacity="0.78"/><rect x="150.7" y="77.4" width="4.6" height="3.0" fill="#7d8f85" opacity="0.64"/><rect x="21.0" y="54.7" width="5.1" height="1.3" fill="#3f6a8e" opacity="0.88"/><rect x="115.9" y="55.2" width="6.6" height="3.2" fill="#a9bcc4" opacity="0.62"/><rect x="91.7" y="57.8" width="6.2" height="1.7" fill="#3f6a8e" opacity="0.69"/><rect x="120.7" y="70.1" width="1.5" height="2.9" fill="#e4e7e8" opacity="0.62"/><rect x="60.8" y="62.9" width="6.7" height="2.1" fill="#3f6a8e" opacity="0.71"/><rect x="17.8" y="87.8" width="3.6" height="3.1" fill="#c7d0d3" opacity="0.88"/><rect x="41.4" y="55.7" width="7.4" height="1.0" fill="#5b86a6" opacity="0.57"/><rect x="181.6" y="47.5" width="5.0" height="1.8" fill="#7b9fb8" opacity="0.68"/><rect x="104.8" y="72.5" width="4.0" height="1.9" fill="#b8c4c8" opacity="0.65"/><rect x="2.1" y="32.4" width="3.0" height="2.0" fill="#4d89c0" opacity="0.63"/><rect x="113.8" y="65.3" width="7.2" height="3.4" fill="#e4e7e8" opacity="0.63"/><rect x="155.5" y="86.4" width="5.3" height="2.7" fill="#8aa9b8" opacity="0.53"/><rect x="64.5" y="91.6" width="6.9" height="2.3" fill="#a9bcc4" opacity="0.75"/><rect x="59.8" y="50.3" width="7.6" height="2.3" fill="#7b9fb8" opacity="0.73"/><rect x="106.2" y="81.1" width="2.9" height="3.2" fill="#7b9fb8" opacity="0.53"/><rect x="127.7" y="67.2" width="3.8" height="3.5" fill="#5b86a6" opacity="0.76"/><rect x="2.2" y="28.2" width="6.1" height="2.4" fill="#9aa3a8" opacity="0.63"/><rect x="20.0" y="29.0" width="1.7" height="1.4" fill="#b9a98a" opacity="0.71"/><rect x="176.6" y="86.2" width="4.8" height="1.4" fill="#93a59a" opacity="0.63"/><rect x="24.6" y="38.2" width="6.4" height="1.3" fill="#a9bcc4" opacity="0.48"/><rect x="192.1" y="59.9" width="4.5" height="2.1" fill="#5b86a6" opacity="0.74"/><rect x="138.8" y="65.6" width="2.4" height="1.6" fill="#4e7490" opacity="0.53"/><rect x="54.0" y="34.5" width="7.4" height="2.5" fill="#b8c4c8" opacity="0.54"/><rect x="126.5" y="29.3" width="2.9" height="2.0" fill="#5b86a6" opacity="0.65"/><rect x="125.7" y="44.2" width="1.8" height="3.3" fill="#7c9a72" opacity="0.59"/><rect x="182.2" y="81.0" width="3.5" height="2.5" fill="#e4e7e8" opacity="0.89"/><rect x="13.7" y="72.0" width="5.9" height="2.5" fill="#7b9fb8" opacity="0.59"/><rect x="177.4" y="59.5" width="6.7" height="1.6" fill="#7c9a72" opacity="0.53"/><rect x="76.8" y="28.5" width="7.2" height="2.0" fill="#b8c4c8" opacity="0.50"/><rect x="108.2" y="53.1" width="4.1" height="1.2" fill="#a9bcc4" opacity="0.64"/><rect x="185.1" y="64.0" width="4.0" height="2.2" fill="#b8c4c8" opacity="0.56"/><rect x="7.1" y="71.2" width="3.7" height="1.4" fill="#7d8f85" opacity="0.49"/><rect x="54.7" y="82.3" width="2.3" height="2.1" fill="#c7d0d3" opacity="0.52"/><rect x="71.5" y="75.0" width="3.9" height="3.4" fill="#93a59a" opacity="0.58"/><rect x="96.5" y="41.3" width="7.1" height="2.7" fill="#4e7490" opacity="0.72"/><rect x="89.3" y="92.3" width="5.0" height="2.0" fill="#4d89c0" opacity="0.55"/><rect x="176.8" y="36.0" width="4.8" height="2.4" fill="#4e7490" opacity="0.78"/><rect x="155.0" y="29.9" width="6.2" height="1.4" fill="#6f93ab" opacity="0.63"/><rect x="17.4" y="39.5" width="7.0" height="1.8" fill="#a9bcc4" opacity="0.48"/><rect x="185.2" y="80.3" width="6.4" height="1.5" fill="#9aa3a8" opacity="0.49"/><rect x="58.5" y="81.1" width="4.1" height="1.9" fill="#d6dadb" opacity="0.80"/><rect x="178.9" y="84.0" width="2.4" height="1.7" fill="#6f93ab" opacity="0.61"/><rect x="162.0" y="72.9" width="7.3" height="1.1" fill="#d6dadb" opacity="0.56"/><rect x="171.6" y="50.9" width="5.6" height="1.5" fill="#a9bcc4" opacity="0.57"/><rect x="123.4" y="42.2" width="5.9" height="2.0" fill="#7c9a72" opacity="0.64"/><rect x="153.4" y="38.2" width="6.3" height="2.4" fill="#7c9a72" opacity="0.70"/><rect x="46.1" y="60.4" width="4.9" height="3.3" fill="#c9b68c" opacity="0.61"/><rect x="0.2" y="82.2" width="6.5" height="1.7" fill="#5b86a6" opacity="0.84"/><rect x="118.6" y="73.2" width="7.8" height="2.7" fill="#5b86a6" opacity="0.81"/><rect x="42.6" y="87.4" width="6.4" height="1.2" fill="#3f6a8e" opacity="0.90"/><rect x="124.7" y="42.4" width="4.9" height="1.9" fill="#7b9fb8" opacity="0.65"/><rect x="69.0" y="60.7" width="6.0" height="3.1" fill="#d6dadb" opacity="0.68"/><rect x="137.1" y="41.4" width="5.9" height="3.1" fill="#7d8f85" opacity="0.67"/><rect x="38.4" y="89.9" width="6.9" height="2.4" fill="#7c9a72" opacity="0.70"/><rect x="196.5" y="69.4" width="5.0" height="1.6" fill="#5b86a6" opacity="0.53"/><rect x="70.4" y="34.0" width="5.6" height="1.3" fill="#e4e7e8" opacity="0.75"/><rect x="48.2" y="43.7" width="4.8" height="2.1" fill="#b8c4c8" opacity="0.76"/><rect x="27.0" y="74.0" width="5.3" height="1.6" fill="#a9bcc4" opacity="0.70"/><rect x="154.2" y="39.0" width="5.8" height="2.5" fill="#d6dadb" opacity="0.83"/><rect x="82.3" y="41.4" width="6.0" height="1.0" fill="#e4e7e8" opacity="0.54"/><rect x="12.2" y="46.3" width="2.8" height="2.8" fill="#d6dadb" opacity="0.88"/><rect x="32.7" y="56.9" width="5.2" height="1.7" fill="#b9a98a" opacity="0.48"/><rect x="2.2" y="92.5" width="6.4" height="1.2" fill="#6f8a62" opacity="0.89"/><rect x="114.3" y="35.1" width="4.7" height="2.1" fill="#93a59a" opacity="0.80"/><rect x="65.2" y="51.4" width="2.1" height="1.7" fill="#4e7490" opacity="0.74"/><rect x="15.8" y="76.6" width="1.7" height="2.0" fill="#7d8f85" opacity="0.58"/><rect x="37.6" y="69.5" width="7.0" height="3.3" fill="#7c9a72" opacity="0.50"/><rect x="145.7" y="48.2" width="5.5" height="1.9" fill="#b8c4c8" opacity="0.59"/><rect x="74.7" y="63.8" width="3.9" height="3.1" fill="#c7d0d3" opacity="0.48"/><rect x="21.7" y="80.2" width="7.5" height="3.5" fill="#3f6a8e" opacity="0.86"/><rect x="191.5" y="60.1" width="4.7" height="1.4" fill="#9aa3a8" opacity="0.72"/><rect x="127.0" y="37.2" width="3.0" height="1.3" fill="#3f6a8e" opacity="0.49"/><rect x="8.1" y="56.6" width="2.7" height="2.8" fill="#6f93ab" opacity="0.46"/><rect x="123.8" y="82.2" width="4.8" height="1.4" fill="#8aa9b8" opacity="0.75"/><rect x="104.3" y="55.4" width="3.7" height="2.1" fill="#7c9a72" opacity="0.86"/><rect x="33.3" y="47.2" width="4.4" height="2.4" fill="#b8c4c8" opacity="0.71"/><rect x="95.0" y="63.3" width="4.9" height="2.1" fill="#b9a98a" opacity="0.86"/><rect x="175.4" y="91.3" width="7.8" height="2.5" fill="#5b86a6" opacity="0.78"/><rect x="67.2" y="70.8" width="5.2" height="2.1" fill="#b8c4c8" opacity="0.67"/><rect x="131.2" y="47.5" width="3.7" height="3.2" fill="#6f93ab" opacity="0.83"/><rect x="45.1" y="76.1" width="6.0" height="1.4" fill="#c9b68c" opacity="0.62"/><rect x="117.7" y="55.1" width="4.9" height="2.4" fill="#3f6a8e" opacity="0.57"/><rect x="46.1" y="91.0" width="2.8" height="2.9" fill="#c7d0d3" opacity="0.84"/><rect x="51.4" y="34.2" width="5.0" height="1.6" fill="#e4e7e8" opacity="0.55"/><rect x="92.9" y="63.2" width="6.0" height="2.8" fill="#c9b68c" opacity="0.71"/><rect x="172.6" y="72.2" width="6.7" height="1.3" fill="#4d89c0" opacity="0.70"/><rect x="144.9" y="77.2" width="2.2" height="3.5" fill="#4d89c0" opacity="0.50"/><rect x="168.3" y="53.5" width="2.6" height="3.4" fill="#c9b68c" opacity="0.66"/><rect x="18.9" y="52.3" width="5.5" height="2.0" fill="#5b86a6" opacity="0.62"/><rect x="3.1" y="66.6" width="2.9" height="1.7" fill="#7d8f85" opacity="0.64"/><rect x="180.1" y="68.4" width="7.2" height="2.4" fill="#b8c4c8" opacity="0.53"/><rect x="151.1" y="50.2" width="6.5" height="2.7" fill="#4e7490" opacity="0.51"/><rect x="75.6" y="75.9" width="7.7" height="2.8" fill="#5b86a6" opacity="0.82"/><rect x="71.6" y="51.1" width="3.6" height="2.5" fill="#5b86a6" opacity="0.87"/><rect x="136.9" y="44.5" width="2.8" height="2.1" fill="#c9b68c" opacity="0.65"/><rect x="160.4" y="59.7" width="2.0" height="1.6" fill="#7d8f85" opacity="0.70"/><rect x="58.8" y="72.7" width="4.0" height="1.4" fill="#4e7490" opacity="0.69"/><rect x="139.8" y="80.5" width="7.7" height="1.0" fill="#6f8a62" opacity="0.90"/><rect x="98.7" y="59.5" width="1.7" height="3.1" fill="#8aa9b8" opacity="0.53"/><rect x="165.9" y="72.2" width="4.1" height="2.2" fill="#7c9a72" opacity="0.76"/><rect x="90.9" y="42.9" width="7.7" height="2.3" fill="#b8c4c8" opacity="0.60"/><rect x="43.8" y="86.1" width="5.3" height="1.1" fill="#7c9a72" opacity="0.82"/><rect x="147.4" y="49.5" width="4.5" height="3.3" fill="#6f8a62" opacity="0.45"/><rect x="117.4" y="49.7" width="1.6" height="2.1" fill="#5b86a6" opacity="0.73"/><rect x="147.4" y="37.3" width="4.0" height="1.2" fill="#4e7490" opacity="0.61"/><rect x="116.3" y="66.0" width="2.4" height="2.7" fill="#b9a98a" opacity="0.86"/><rect x="19.3" y="41.0" width="4.3" height="2.4" fill="#a9bcc4" opacity="0.61"/><rect x="57.1" y="79.7" width="7.2" height="3.3" fill="#8aa9b8" opacity="0.59"/><rect x="154.7" y="76.1" width="4.8" height="2.6" fill="#b8c4c8" opacity="0.84"/><rect x="145.1" y="49.7" width="6.1" height="2.7" fill="#e4e7e8" opacity="0.68"/><rect x="181.3" y="80.6" width="8.0" height="1.4" fill="#93a59a" opacity="0.45"/><rect x="176.5" y="57.5" width="4.4" height="2.4" fill="#9aa3a8" opacity="0.87"/><rect x="118.9" y="37.3" width="6.2" height="1.6" fill="#c9b68c" opacity="0.70"/><rect x="190.0" y="50.1" width="7.5" height="2.5" fill="#8aa9b8" opacity="0.71"/><rect x="61.7" y="51.0" width="4.5" height="3.4" fill="#7b9fb8" opacity="0.77"/><rect x="186.9" y="82.5" width="3.6" height="1.4" fill="#4e7490" opacity="0.70"/><rect x="153.7" y="68.7" width="3.0" height="1.1" fill="#5b86a6" opacity="0.63"/><rect x="40.6" y="67.2" width="7.1" height="2.6" fill="#93a59a" opacity="0.56"/><rect x="11.5" y="36.4" width="1.8" height="1.2" fill="#c9b68c" opacity="0.60"/><rect x="27.7" y="40.2" width="5.0" height="3.2" fill="#6f8a62" opacity="0.87"/><rect x="43.0" y="49.2" width="6.4" height="2.6" fill="#3f6a8e" opacity="0.72"/><rect x="162.2" y="39.3" width="7.1" height="3.0" fill="#8aa9b8" opacity="0.73"/><rect x="67.8" y="60.1" width="5.4" height="1.6" fill="#d6dadb" opacity="0.84"/><rect x="5.2" y="48.6" width="5.8" height="1.8" fill="#7b9fb8" opacity="0.73"/><rect x="146.8" y="49.4" width="2.1" height="1.4" fill="#7d8f85" opacity="0.69"/><rect x="170.4" y="51.3" width="3.9" height="1.9" fill="#c9b68c" opacity="0.84"/><rect x="31.1" y="91.8" width="5.2" height="1.6" fill="#4e7490" opacity="0.82"/><rect x="96.8" y="30.1" width="5.7" height="2.6" fill="#b9a98a" opacity="0.89"/><rect x="91.9" y="46.1" width="4.9" height="3.4" fill="#7d8f85" opacity="0.56"/><rect x="113.1" y="34.5" width="6.8" height="3.4" fill="#7d8f85" opacity="0.90"/><rect x="46.2" y="77.2" width="2.1" height="1.1" fill="#7d8f85" opacity="0.51"/><rect x="110.1" y="41.3" width="6.6" height="1.6" fill="#b8c4c8" opacity="0.78"/><rect x="183.0" y="84.6" width="7.1" height="2.9" fill="#4d89c0" opacity="0.46"/><rect x="157.7" y="43.8" width="7.9" height="2.2" fill="#b8c4c8" opacity="0.86"/><rect x="78.9" y="41.8" width="6.6" height="1.1" fill="#6f93ab" opacity="0.48"/><rect x="130.8" y="54.1" width="7.1" height="1.1" fill="#c9b68c" opacity="0.62"/><rect x="183.9" y="52.4" width="5.8" height="3.2" fill="#6f93ab" opacity="0.56"/><rect x="53.2" y="56.2" width="3.0" height="1.5" fill="#7b9fb8" opacity="0.74"/><rect x="60.5" y="92.6" width="2.9" height="2.4" fill="#7c9a72" opacity="0.66"/><rect x="189.3" y="78.0" width="7.7" height="1.3" fill="#9aa3a8" opacity="0.58"/><rect x="67.2" y="59.6" width="7.3" height="1.4" fill="#d6dadb" opacity="0.55"/><rect x="10.6" y="78.8" width="7.0" height="2.8" fill="#5b86a6" opacity="0.80"/><rect x="175.0" y="39.8" width="7.1" height="3.5" fill="#9aa3a8" opacity="0.76"/><rect x="163.2" y="37.9" width="7.4" height="1.3" fill="#9aa3a8" opacity="0.52"/><rect x="149.2" y="34.3" width="2.6" height="2.7" fill="#8aa9b8" opacity="0.64"/><rect x="130.2" y="71.2" width="4.1" height="1.8" fill="#5b86a6" opacity="0.71"/><rect x="40.8" y="68.8" width="1.6" height="1.3" fill="#c7d0d3" opacity="0.71"/><rect x="141.6" y="75.4" width="1.8" height="3.2" fill="#8aa9b8" opacity="0.85"/><rect x="24.4" y="59.7" width="2.4" height="2.1" fill="#7c9a72" opacity="0.55"/><rect x="109.5" y="69.2" width="5.0" height="3.5" fill="#4d89c0" opacity="0.61"/><rect x="100.6" y="87.7" width="3.8" height="1.5" fill="#c7d0d3" opacity="0.78"/><rect x="55.3" y="39.5" width="3.2" height="1.2" fill="#5b86a6" opacity="0.54"/><rect x="9.7" y="79.3" width="7.7" height="1.7" fill="#6f8a62" opacity="0.76"/><rect x="132.4" y="63.4" width="5.1" height="2.7" fill="#4e7490" opacity="0.63"/><rect x="64.5" y="55.2" width="7.8" height="2.0" fill="#3f6a8e" opacity="0.85"/><rect x="162.9" y="86.4" width="5.6" height="1.6" fill="#4d89c0" opacity="0.87"/><rect x="51.6" y="67.7" width="4.0" height="1.6" fill="#93a59a" opacity="0.75"/><rect x="17.6" y="68.4" width="1.7" height="2.8" fill="#3f6a8e" opacity="0.76"/><rect x="65.8" y="70.0" width="5.1" height="1.8" fill="#c9b68c" opacity="0.45"/><rect x="151.3" y="83.5" width="4.8" height="2.5" fill="#3f6a8e" opacity="0.56"/><rect x="127.6" y="76.3" width="4.0" height="2.8" fill="#3f6a8e" opacity="0.89"/><rect x="54.0" y="70.9" width="6.9" height="1.2" fill="#b9a98a" opacity="0.75"/><rect x="187.3" y="77.8" width="3.2" height="3.1" fill="#b8c4c8" opacity="0.68"/><rect x="96.6" y="42.4" width="2.4" height="3.3" fill="#4d89c0" opacity="0.61"/><rect x="41.5" y="39.0" width="3.9" height="2.7" fill="#7d8f85" opacity="0.82"/><rect x="93.3" y="69.6" width="6.9" height="3.2" fill="#5b86a6" opacity="0.59"/><rect x="73.3" y="84.1" width="4.3" height="2.0" fill="#4e7490" opacity="0.62"/><rect x="73.9" y="71.1" width="4.9" height="1.8" fill="#8aa9b8" opacity="0.57"/><rect x="58.9" y="57.0" width="2.2" height="2.6" fill="#7c9a72" opacity="0.79"/><rect x="30.4" y="72.2" width="3.9" height="2.3" fill="#c7d0d3" opacity="0.73"/><rect x="106.1" y="80.1" width="3.1" height="2.4" fill="#6f93ab" opacity="0.71"/><rect x="11.7" y="39.6" width="6.2" height="1.7" fill="#6f8a62" opacity="0.57"/><rect x="53.8" y="56.5" width="4.9" height="2.2" fill="#8aa9b8" opacity="0.54"/><rect x="85.8" y="79.5" width="5.5" height="1.9" fill="#5b86a6" opacity="0.77"/><rect x="76.2" y="30.7" width="6.4" height="3.4" fill="#7b9fb8" opacity="0.74"/><rect x="164.4" y="50.9" width="4.0" height="2.4" fill="#93a59a" opacity="0.89"/><rect x="172.6" y="65.7" width="1.9" height="1.5" fill="#8aa9b8" opacity="0.49"/><rect x="90.3" y="53.6" width="4.2" height="3.3" fill="#6f93ab" opacity="0.50"/><rect x="114.2" y="88.8" width="6.1" height="2.1" fill="#e4e7e8" opacity="0.53"/><rect x="13.2" y="53.8" width="2.4" height="2.9" fill="#6f93ab" opacity="0.75"/><rect x="150.1" y="54.1" width="1.8" height="2.7" fill="#b9a98a" opacity="0.60"/><rect x="78.5" y="57.9" width="2.1" height="3.1" fill="#c9b68c" opacity="0.82"/><rect x="20.6" y="33.7" width="6.4" height="2.4" fill="#5b86a6" opacity="0.82"/><rect x="40.5" y="49.8" width="7.1" height="2.4" fill="#7b9fb8" opacity="0.83"/><rect x="28.4" y="54.5" width="1.8" height="2.6" fill="#6f8a62" opacity="0.60"/><rect x="105.0" y="28.4" width="7.9" height="1.7" fill="#4e7490" opacity="0.49"/><rect x="77.8" y="71.2" width="3.4" height="2.0" fill="#7b9fb8" opacity="0.76"/><rect x="62.2" y="44.2" width="4.0" height="2.1" fill="#b9a98a" opacity="0.57"/><rect x="40.9" y="31.4" width="5.0" height="1.9" fill="#d6dadb" opacity="0.75"/><rect x="143.9" y="37.2" width="7.5" height="1.9" fill="#d6dadb" opacity="0.86"/><rect x="112.7" y="31.3" width="3.5" height="2.3" fill="#7b9fb8" opacity="0.88"/><rect x="166.9" y="30.3" width="2.9" height="2.1" fill="#93a59a" opacity="0.77"/><rect x="162.7" y="66.5" width="4.5" height="3.3" fill="#d6dadb" opacity="0.54"/><rect x="41.2" y="39.7" width="7.1" height="1.3" fill="#7d8f85" opacity="0.84"/><rect x="14.6" y="66.8" width="2.7" height="3.3" fill="#b9a98a" opacity="0.78"/><rect x="33.3" y="42.4" width="6.2" height="2.9" fill="#93a59a" opacity="0.69"/><rect x="32.2" y="78.5" width="6.1" height="2.3" fill="#d6dadb" opacity="0.49"/><rect x="159.0" y="89.8" width="4.2" height="2.6" fill="#4e7490" opacity="0.77"/><rect x="89.7" y="55.6" width="7.1" height="3.3" fill="#7d8f85" opacity="0.47"/><rect x="169.5" y="47.1" width="3.0" height="2.5" fill="#6f8a62" opacity="0.77"/><rect x="145.8" y="48.1" width="3.2" height="2.4" fill="#93a59a" opacity="0.52"/><rect x="162.0" y="91.7" width="4.0" height="1.1" fill="#3f6a8e" opacity="0.52"/><rect x="59.0" y="70.6" width="6.0" height="1.5" fill="#7d8f85" opacity="0.78"/><path d="M0 66 L60 58 L66 60 L0 72z" fill="#c8c2b0" opacity="0.55"/><path d="M10 94 L70 66 L76 68 L22 94z" fill="#b7b09c" opacity="0.5"/><path d="M40 94 L95 72 L99 74 L50 94z" fill="#a9a392" opacity="0.45"/><path d="M118 70 L175 60 L203 66 L203 80 L130 84z" fill="#6b7a6e" opacity="0.4"/><rect x="150" y="58" width="22" height="5" fill="#8fae6a" opacity="0.6"/><rect x="175" y="64" width="20" height="4" fill="#5d8fc4" opacity="0.6"/></g><rect x="43.5" y="1" width="1.7" height="25" fill="#eeeaea"/><rect x="43.5" y="2" width="1.7" height="3" fill="#d85050"/><rect x="43.5" y="8" width="1.7" height="3" fill="#d85050"/><rect x="43.5" y="14" width="1.7" height="3" fill="#d85050"/><rect x="43.5" y="20" width="1.7" height="3" fill="#d85050"/><rect x="56.0" y="10" width="1.5" height="16" fill="#eeeaea"/><rect x="56.0" y="11" width="1.5" height="3" fill="#d85050"/><rect x="56.0" y="17" width="1.5" height="3" fill="#d85050"/><rect x="56.0" y="23" width="1.5" height="3" fill="#d85050"/><rect x="65.8" y="10" width="1.5" height="16" fill="#eeeaea"/><rect x="65.8" y="11" width="1.5" height="3" fill="#d85050"/><rect x="65.8" y="17" width="1.5" height="3" fill="#d85050"/><rect x="65.8" y="23" width="1.5" height="3" fill="#d85050"/><rect x="77.5" y="12" width="1.4" height="14" fill="#eeeaea"/><rect x="77.5" y="13" width="1.4" height="3" fill="#d85050"/><rect x="77.5" y="19" width="1.4" height="3" fill="#d85050"/><rect x="77.5" y="25" width="1.4" height="3" fill="#d85050"/><rect x="102" y="0" width="4.2" height="62" fill="#e9e5e3"/><rect x="102" y="3" width="4.2" height="6" fill="#d84848"/><rect x="102" y="14" width="4.2" height="3" fill="#d84848"/><rect x="102" y="40" width="4.2" height="4" fill="#c94040"/><path d="M107 29 L115 13 L118 15 L110 29z" fill="#e2485a"/><path d="M150 26 Q175 18 203 20 L203 30 L150 30z" fill="#a9b6bc" opacity="0.5"/><path d="M136 36 Q141 32 146 36 L148 48 L134 48z" fill="#d9dddf"/><path d="M156 36 Q161 33 166 36 L167 46 L155 46z" fill="#d5d9db"/><ellipse cx="141" cy="28" rx="10" ry="6" fill="#eef0f1" opacity="0.35"/><ellipse cx="160" cy="27" rx="8" ry="5" fill="#eef0f1" opacity="0.3"/><ellipse cx="35" cy="8" rx="30" ry="9" fill="#f6f7f8" opacity="0.3"/><rect x="112" y="36" width="2.4" height="42" fill="#9fc0d0" opacity="0.85"/><rect x="118" y="44" width="2.4" height="34" fill="#d7dde0" opacity="0.85"/><rect x="124" y="38" width="2.4" height="40" fill="#5f90b0" opacity="0.85"/><rect x="131" y="46" width="2.4" height="30" fill="#c4ccd0" opacity="0.85"/><rect x="92" y="50" width="2.4" height="26" fill="#b9c3c7" opacity="0.85"/><rect x="0" y="60" width="202.7" height="34.5" fill="url(#ctl)"/></svg>
<div class="a" style="left:5.4px;top:31.9px;width:94.6px;height:27.5px;border-radius:4px;background:rgba(244,245,246,.9)"></div>
<div class="a" style="left:13.4px;top:45.8px;width:9px;height:0.7px;background:#555"></div>
<div class="t" style="left:29.40px;top:42.36px;font-size:6.8px;color:#2a2a2a;transform:scaleX(0.835)">Stay Cool with HydroChill</div>
<div class="a" style="left:148.6px;top:43.1px;width:48px;height:15.5px;border-radius:8px;background:rgba(28,28,28,.72)"></div>
<div class="t" style="left:156.00px;top:46.94px;font-size:7.2px;color:#fff;font-weight:bold;transform:scaleX(0.844)">Bỏ qua</div>
<div class="a" style="left:182.7px;top:47.6px;width:0;height:0;border-left:5.2px solid #fff;border-top:3.4px solid transparent;border-bottom:3.4px solid transparent"></div>
<div class="a" style="left:188.3px;top:47.6px;width:1.2px;height:6.8px;background:#fff"></div>
<div class="t" style="left:5.90px;top:62.63px;font-size:6.3px;color:#fff;font-weight:bold;text-shadow:0 0 1px rgba(0,0,0,.4);transform:scaleX(0.890)">Được tài trợ&nbsp;ⓘ&nbsp;· 1/2&nbsp;&nbsp;&nbsp;&nbsp; try.hydrochill.co</div>
<div class="a" style="left:5.4px;top:75.7px;width:192px;height:1.6px;background:#f4c400"></div>
<div class="a" style="left:10.6px;top:83.1px;width:0;height:0;border-left:6px solid #fff;border-top:3.8px solid transparent;border-bottom:3.8px solid transparent"></div>
<div class="a" style="left:27.6px;top:83.6px;width:0;height:0;border-left:5px solid #fff;border-top:3.3px solid transparent;border-bottom:3.3px solid transparent"></div>
<div class="a" style="left:32.9px;top:83.6px;width:1.2px;height:6.6px;background:#fff"></div>
<svg class="a" style="left:43.5px;top:82.9px" width="9" height="8" viewBox="0 0 24 22"><path d="M2 7h5l6-5v18l-6-5H2z" fill="#fff"/><path d="M16 7c2 2 2 6 0 8" stroke="#fff" stroke-width="2.4" fill="none"/></svg>
<div class="t" style="left:60.00px;top:83.27px;font-size:6.6px;color:#fff;transform:scaleX(0.897)">0:51 / 2:29</div>
<div class="a" style="left:98px;top:84.3px;width:12px;height:5.2px;border-radius:3px;background:rgba(255,255,255,.9)"></div>
<div class="a" style="left:104.5px;top:84.7px;width:4.4px;height:4.4px;border-radius:50%;background:#333"></div>
<div class="a" style="left:115.3px;top:83.6px;width:9.4px;height:6.6px;border:1.2px solid #fff;border-radius:1px"></div>
<svg class="a" style="left:132.2px;top:82.4px" width="9" height="9" viewBox="0 0 24 24"><path d="M12 1.5l2 2.5 3.2-.8.7 3.2 3 1.5-1.2 3 1.2 3-3 1.5-.7 3.2-3.2-.8-2 2.5-2-2.5-3.2.8-.7-3.2-3-1.5 1.2-3-1.2-3 3-1.5.7-3.2 3.2.8z" fill="#fff"/><circle cx="12" cy="12" r="3.5" fill="#666"/></svg>
<div class="a" style="left:148.4px;top:83.6px;width:10px;height:6.6px;border:1.2px solid #fff;border-radius:1px"></div>
<div class="a" style="left:153.2px;top:86.3px;width:4px;height:2.8px;background:#fff"></div>
<div class="a" style="left:165.2px;top:83.6px;width:11px;height:6.6px;border:1.2px solid #fff;border-radius:1px"></div>
<svg class="a" style="left:183.5px;top:82.4px" width="9" height="9" viewBox="0 0 24 24" fill="none" stroke="#fff" stroke-width="2.6"><path d="M3 9V3h6M15 3h6v6M21 15v6h-6M9 21H3v-6"/></svg>
</div><!-- banner -->
<div class="a" style="left:0;top:464px;width:900px;height:42px;background:linear-gradient(90deg,#283484 0%,#283a88 30%,#2a5aa2 65%,#2d7fc0 100%)"></div>
<svg class="a" style="left:20px;top:460px" width="100" height="46" viewBox="0 0 900 414">
<path d="M152 234 Q130 228 134 200 L210 82 Q232 55 256 80 L335 138 L414 80 Q438 55 460 82 L526 190 Q536 226 510 234 Z" fill="#fff"/>
<path d="M214 88 L292 204 M456 88 L378 204" stroke="#283484" stroke-width="11" fill="none"/>
<path d="M246 236 Q250 182 335 180 Q420 182 424 236" stroke="#283484" stroke-width="11" fill="none"/>
<text x="332" y="345" font-family="Liberation Sans" font-weight="bold" font-size="132" fill="#fff" stroke="#fff" stroke-width="10" text-anchor="middle" letter-spacing="12">MKT</text>
<rect x="165" y="370" width="340" height="9" fill="#fff" opacity="0.35"/>
</svg>
<div class="t" style="left:92.00px;top:476px;font-size:17px;color:#f2f3f9;letter-spacing:0.6px;transform:scaleX(0.911)">Hiệu quả - Nhanh - Dễ dùng</div>
<svg class="a" style="left:737px;top:476px" width="19" height="19" viewBox="0 0 24 24" fill="none" stroke="#fff" stroke-width="1.6"><circle cx="12" cy="12" r="10.5" fill="#fff"/><path d="M12 1.5v21M1.5 12h21M3.5 6.5h17M3.5 17.5h17M12 1.5c-4 3-5 7-5 10.5s1 7.5 5 10.5M12 1.5c4 3 5 7 5 10.5s-1 7.5-5 10.5" stroke="#2b6bb2" stroke-width="1.3"/></svg>
<div class="t" style="left:764.30px;top:477px;font-size:17px;color:#fff;letter-spacing:0.3px;transform:scaleX(0.854)">phanmemmkt.vn</div>
</body></html>
